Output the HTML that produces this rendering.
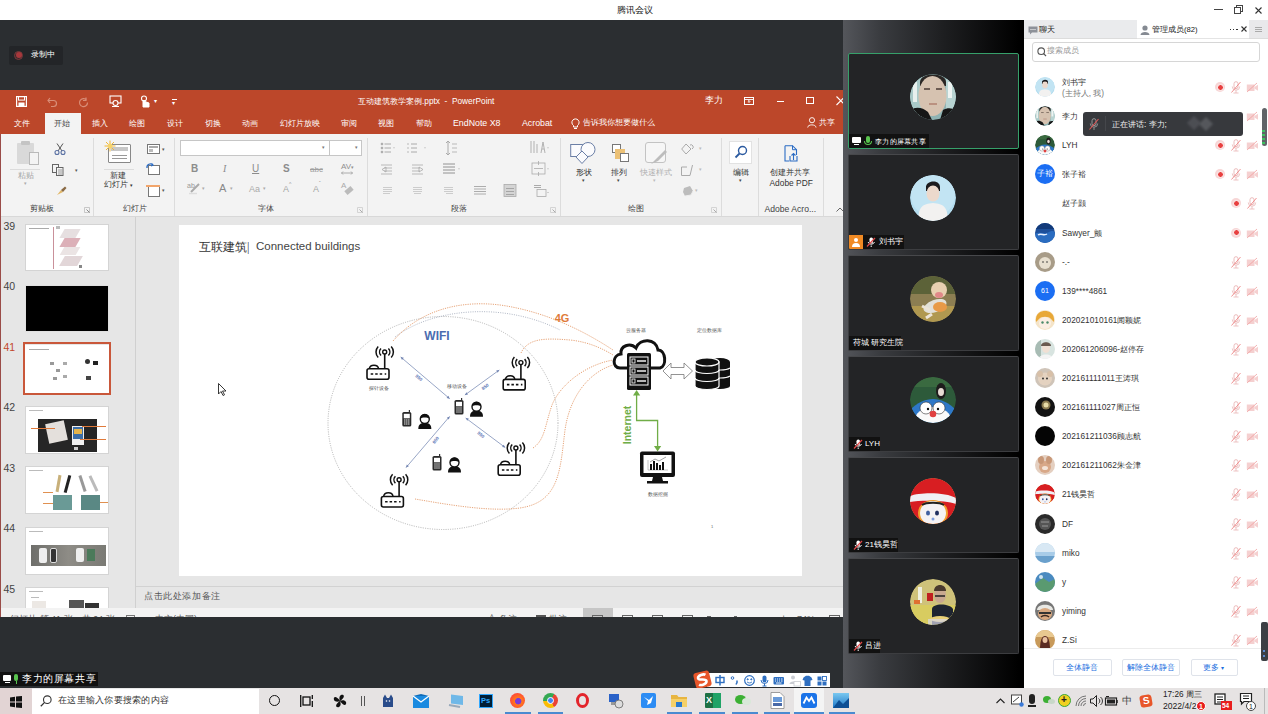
<!DOCTYPE html>
<html><head><meta charset="utf-8">
<style>
*{margin:0;padding:0;box-sizing:border-box}
html,body{width:1268px;height:714px;overflow:hidden;background:#fff;font-family:"Liberation Sans",sans-serif;}
.a{position:absolute}
.t{position:absolute;white-space:nowrap;line-height:1}
svg{position:absolute;overflow:visible}
#title{left:0;top:0;width:1268px;height:20px;background:#fff}
#main{left:0;top:20px;width:843px;height:668px;background:#2b2e31}
#ppt{left:0;top:90px;width:843px;height:527px;background:#e6e6e6;overflow:hidden}
#pttl{left:0;top:0;width:843px;height:44px;background:#bc472a;color:#fff}
#ribbon{left:0;top:44px;width:843px;height:83px;background:#f3f3f3;border-bottom:1px solid #d8d8d8}
.rl{position:absolute;white-space:nowrap;line-height:1;font-size:8px;color:#444}
.sep{position:absolute;top:4px;width:1px;height:78px;background:#dcdcdc}
#thumbs{left:0;top:127px;width:136px;height:391px;background:#e6e6e6;border-right:1px solid #d0d0d0}
.th{position:absolute;left:24.5px;width:84px;height:47px;background:#fff;border:1px solid #d4d4d4}
.tn{position:absolute;left:3.5px;font-size:10.5px;color:#444;line-height:1}
#slide{left:179px;top:135px;width:623px;height:351px;background:#fff;overflow:hidden}
#notes{left:136px;top:496px;width:707px;height:22px;border-top:1px solid #d2d2d2}
#status{left:0;top:518px;width:843px;height:9px;background:#f3f3f3;overflow:hidden}
#vcol{left:843px;top:20px;width:181px;height:668px;background:linear-gradient(90deg,#54565b 0%,#3a3c40 20%,#1e1f21 55%,#000 97%)}
.tile{position:absolute;left:5px;width:170.5px;height:96px;background:#232426;border:1px solid #3c3d40;border-top-color:#47484b;border-radius:2px;overflow:hidden}
.av{position:absolute;left:61px;top:20px;width:46px;height:46px;border-radius:50%;overflow:hidden}
.lab{position:absolute;left:0;bottom:0;height:14px;background:#111;color:#fff;font-size:8px;line-height:14px;white-space:nowrap}
#panel{left:1024px;top:20px;width:244px;height:668px;background:#fff;overflow:hidden}
.row{position:absolute;left:0;width:244px;height:29px}
.mav{position:absolute;left:11px;top:4px;width:20px;height:20px;border-radius:50%;overflow:hidden}
.mn{position:absolute;left:38px;top:10px;font-size:8.3px;color:#333;white-space:nowrap;line-height:1}
#taskbar{left:0;top:688px;width:1268px;height:26px;background:#e6e3e3}
</style></head><body>
<div id="title" class="a">
  <div class="t" style="left:617px;top:6px;font-size:8.5px;color:#111">腾讯会议</div>
  <div class="a" style="left:1214px;top:9.3px;width:8.5px;height:1.2px;background:#444"></div>
  <div class="a" style="left:1236px;top:5px;width:7px;height:7px;border:1px solid #444"></div>
  <div class="a" style="left:1234px;top:7px;width:7px;height:7px;border:1px solid #444;background:#fff"></div>
  <svg style="left:1254.5px;top:6.5px" width="8" height="8"><path d="M0.5 0.5L6.5 6.5M6.5 0.5L0.5 6.5" stroke="#333" stroke-width="1.1"/></svg>
</div>
<div id="main" class="a">
  <div class="a" style="left:9px;top:26px;width:54px;height:19px;background:#232528;border-radius:2px"></div>
  <div class="a" style="left:14px;top:30.5px;width:9px;height:9px;border-radius:50%;border:1px solid #7a3a3c;background:#3a2a2c"></div>
  <div class="a" style="left:15.5px;top:32px;width:6px;height:6px;border-radius:50%;background:#a8383c"></div>
  <div class="t" style="left:31px;top:31px;font-size:7.8px;color:#fff">录制中</div>
  <!-- screen share label -->
  <div class="a" style="left:0;top:652px;width:98px;height:14px;background:#111"></div>
  <div class="a" style="left:3px;top:655px;width:8px;height:6px;background:#fff;border-radius:1px"></div>
  <div class="a" style="left:5px;top:662px;width:5px;height:1px;background:#fff"></div>
  <div class="a" style="left:14px;top:654px;width:4px;height:7px;background:#58c34e;border-radius:2px"></div>
  <div class="a" style="left:16px;top:661px;width:1px;height:3px;background:#58c34e"></div>
  <div class="t" style="left:22px;top:654px;font-size:10px;letter-spacing:0.6px;color:#fff">李力的屏幕共享</div>
  <!-- sogou -->
  <div class="a" style="left:707px;top:653px;width:122.5px;height:14px;background:#fff"></div>
  <svg style="left:692px;top:649.5px" width="22" height="19"><g transform="rotate(-14 11 9.5)"><rect x="2.5" y="1.5" width="16" height="16" rx="3" fill="#e8562a"/><path d="M14.5 5.5C13 4 7 4 6.5 7C6 10 14.5 8.5 14 12C13.5 15 7.5 15 6 13.5" fill="none" stroke="#fff" stroke-width="2.6"/></g></svg>
  <svg style="left:715px;top:654.5px" width="115" height="12">
   <g fill="none" stroke="#2f6fc0">
    <rect x="1" y="2.5" width="8" height="5" stroke-width="1.4"/><path d="M5 0V10.5" stroke-width="1.5"/>
    <circle cx="17.5" cy="3" r="1.3" stroke-width="1"/><path d="M22 5.5V7.5L21 9.5" stroke-width="1.5"/>
    <circle cx="34.5" cy="5.5" r="4.8" stroke-width="1.2"/><circle cx="32.7" cy="4.3" r="0.6" fill="#2f6fc0"/><circle cx="36.3" cy="4.3" r="0.6" fill="#2f6fc0"/><path d="M32 6.8C33 8.3 36 8.3 37 6.8" stroke-width="0.9"/>
    <rect x="47.5" y="0.5" width="4" height="7" rx="2" fill="#2f6fc0" stroke="none"/><path d="M46 5A3.5 3.5 0 0 0 53 5M49.5 8.5V11M47.5 11H51.5" stroke-width="1"/>
    <rect x="58.5" y="2" width="10.5" height="7.5" rx="1" fill="#2f6fc0" stroke="none"/>
    <path d="M60 4H61M62 4H63M64 4H65M66 4H67.5M60 6H61M62 6H63M64 6H65M66 6H67.5M61 8H66.5" stroke="#fff" stroke-width="0.9"/>
   </g>
   <circle cx="78" cy="2.5" r="2" fill="#c9ccd2"/><path d="M74.5 9C74.5 5.5 81.5 5.5 81.5 9Z" fill="#c9ccd2"/><rect x="79" y="6.5" width="6.5" height="4.5" fill="#fff" stroke="#c9ccd2" stroke-width="0.8"/>
   <path d="M88.5 2.5L91 0.8H94L96.5 2.5L97.5 5L95.5 5.5V11H89.5V5.5L87.5 5Z" fill="#2f6fc0"/>
   <rect x="102.5" y="1.5" width="4" height="4" fill="#2f6fc0"/><rect x="107.5" y="1.5" width="4" height="4" fill="none" stroke="#2f6fc0" stroke-width="0.9"/><rect x="102.5" y="6.5" width="4" height="4" fill="#2f6fc0"/><rect x="107.5" y="6.5" width="4" height="4" fill="#2f6fc0"/>
  </svg>
</div>
</div>
<div id="ppt" class="a">
 <div id="pttl" class="a">
  <!-- qat -->
  <svg style="left:16px;top:6px" width="11" height="11"><rect x="0.6" y="0.6" width="9.8" height="9.8" fill="none" stroke="#fff" stroke-width="1.2"/><rect x="2.5" y="0.6" width="6" height="3.5" fill="none" stroke="#fff" stroke-width="1"/><rect x="2.5" y="6.5" width="6" height="4" fill="#fff"/></svg>
  <svg style="left:47px;top:6px" width="11" height="11"><path d="M3 2L1 4.5L3 7M1 4.5H6.5A3 3 0 0 1 6.5 10.5H4" fill="none" stroke="#d98e78" stroke-width="1.2"/></svg>
  <svg style="left:78px;top:6px" width="11" height="11"><path d="M8 1.5V4.5H5M8.5 4A4 4 0 1 0 9.5 6.5" fill="none" stroke="#d98e78" stroke-width="1.2"/></svg>
  <svg style="left:109px;top:5px" width="13" height="13"><rect x="1" y="1" width="11" height="7" fill="none" stroke="#fff" stroke-width="1.1"/><circle cx="6.5" cy="8" r="2.5" fill="#b8472b" stroke="#fff" stroke-width="1.1"/><path d="M3 11.5H10" stroke="#fff"/></svg>
  <svg style="left:139px;top:5px" width="12" height="13"><circle cx="5" cy="3.5" r="2.5" fill="none" stroke="#fff" stroke-width="1.1"/><path d="M4 5V12H10V8L6 6.5V5" fill="#fff" stroke="#fff"/></svg>
  <div class="t" style="left:154px;top:8px;font-size:6px;color:#fff">▾</div>
  <div class="a" style="left:172px;top:9px;width:5px;height:1px;background:#fff"></div>
  <div class="t" style="left:172px;top:10px;font-size:6px;color:#fff">▾</div>
  <div class="t" style="left:358px;top:6.5px;font-size:8.3px;color:#fff">互动建筑教学案例.pptx&nbsp; -&nbsp; PowerPoint</div>
  <div class="t" style="left:705px;top:6px;font-size:8.6px;color:#fff">李力</div>
  <svg style="left:744px;top:6.8px" width="10" height="8"><rect x="0.5" y="0.5" width="9" height="7" fill="none" stroke="#fff"/><path d="M0.5 2.5H9.5M5 3.5V6M3.8 4.7L5 3.5L6.2 4.7" stroke="#fff" fill="none" stroke-width="0.9"/></svg>
  <div class="a" style="left:776.5px;top:10.5px;width:7px;height:1px;background:#fff"></div>
  <div class="a" style="left:806px;top:7.3px;width:7.5px;height:7px;border:1px solid #fff"></div>
  <svg style="left:836px;top:6px" width="10" height="10"><path d="M0.5 0.5L9 9M9 0.5L0.5 9" stroke="#fff" stroke-width="1.1"/></svg>
  <!-- tabs -->
  <div class="a" style="left:45px;top:23px;width:36px;height:21px;background:#f3f3f3"></div>
  <div class="t" style="left:14px;top:29px;font-size:8.3px">文件</div>
  <div class="t" style="left:54px;top:29px;font-size:8.3px;color:#444">开始</div>
  <div class="t" style="left:92px;top:29px;font-size:8.3px">插入</div>
  <div class="t" style="left:129px;top:29px;font-size:8.3px">绘图</div>
  <div class="t" style="left:167px;top:29px;font-size:8.3px">设计</div>
  <div class="t" style="left:205px;top:29px;font-size:8.3px">切换</div>
  <div class="t" style="left:242px;top:29px;font-size:8.3px">动画</div>
  <div class="t" style="left:280px;top:29px;font-size:8.3px">幻灯片放映</div>
  <div class="t" style="left:341px;top:29px;font-size:8.3px">审阅</div>
  <div class="t" style="left:378px;top:29px;font-size:8.3px">视图</div>
  <div class="t" style="left:416px;top:29px;font-size:8.3px">帮助</div>
  <div class="t" style="left:453px;top:29px;font-size:8.8px">EndNote X8</div>
  <div class="t" style="left:522px;top:29px;font-size:8.8px">Acrobat</div>
  <svg style="left:571px;top:27px" width="9" height="12"><path d="M2.5 8.5A3.6 3.6 0 1 1 6.5 8.5V10H2.5Z" fill="none" stroke="#fff" stroke-width="1"/><path d="M3 11.5H6" stroke="#fff"/></svg>
  <div class="t" style="left:583px;top:29px;font-size:8.1px">告诉我你想要做什么</div>
  <svg style="left:806.5px;top:27px" width="10" height="11"><circle cx="5" cy="3.2" r="2.6" fill="none" stroke="#fff" stroke-width="0.9"/><path d="M0.7 10.5C0.7 7 9 7 9 10.5" fill="none" stroke="#fff" stroke-width="0.9"/></svg>
  <div class="t" style="left:819px;top:28px;font-size:8.3px">共享</div>
 </div>
 <div id="ribbon" class="a">
  <!-- clipboard group -->
  <div class="a" style="left:17px;top:9px;width:17px;height:21px;background:#d9d9d9;border-radius:1px"></div>
  <div class="a" style="left:21px;top:7px;width:9px;height:4px;background:#c4c4c4;border-radius:1px"></div>
  <div class="a" style="left:29px;top:18px;width:10px;height:13px;background:#f3f3f3;border:1px solid #b9b9b9"></div>
  <div class="a" style="left:10px;top:35px;width:30px;height:1px;background:#dcdcdc"></div>
  <div class="rl" style="left:18px;top:38px;color:#a6a6a6">粘贴</div>
  <div class="t" style="left:24px;top:47px;font-size:5px;color:#aaa">▾</div>
  <svg style="left:54px;top:9px" width="12" height="12"><path d="M3 0.5L8 8M9 0.5L4 8" stroke="#555" stroke-width="1"/><circle cx="3" cy="9.5" r="2" fill="none" stroke="#5b72a4" stroke-width="1.1"/><circle cx="9" cy="9.5" r="2" fill="none" stroke="#5b72a4" stroke-width="1.1"/></svg>
  <svg style="left:52px;top:30px" width="12" height="12"><rect x="0.5" y="0.5" width="6" height="8" fill="#f3f3f3" stroke="#666"/><rect x="4.5" y="3.5" width="6.5" height="8" fill="#f3f3f3" stroke="#666"/><path d="M6 6H10M6 8H10M6 10H10" stroke="#777" stroke-width="0.7"/></svg>
  <div class="t" style="left:75px;top:34px;font-size:5px;color:#555">▾</div>
  <svg style="left:56px;top:52px" width="11" height="10"><path d="M1 9L5 4L7 6Z" fill="#e2b868"/><path d="M5 4L9 0.5L10.5 2L7 6Z" fill="#8a6a45"/></svg>
  <div class="rl" style="left:30px;top:71px">剪贴板</div>
  <svg style="left:84px;top:73px" width="6" height="6"><path d="M0.5 0.5H5.5V5.5H0.5Z" fill="none" stroke="#bbb" stroke-width="0.8"/><path d="M2.5 2.5L5.5 5.5" stroke="#888"/></svg>
  <div class="sep" style="left:93px"></div>
  <!-- slides group -->
  <div class="a" style="left:108px;top:10px;width:23px;height:19px;background:#fff;border:1px solid #888;border-radius:1px"></div>
  <div class="a" style="left:111px;top:13px;width:17px;height:4px;background:#c7c7c7"></div>
  <div class="a" style="left:112px;top:21px;width:15px;height:1px;background:#999"></div>
  <div class="a" style="left:112px;top:24px;width:15px;height:1px;background:#999"></div>
  <svg style="left:104px;top:6px" width="12" height="12"><path d="M6 0.5V11.5M0.5 6H11.5M2 2L10 10M10 2L2 10" stroke="#f0b73a" stroke-width="1"/><circle cx="6" cy="6" r="2.5" fill="#f6d36b"/></svg>
  <div class="a" style="left:104px;top:35px;width:30px;height:1px;background:#dcdcdc"></div>
  <div class="rl" style="left:110px;top:38px;color:#333">新建</div>
  <div class="rl" style="left:104px;top:47px;color:#333">幻灯片 <span style="font-size:5px">▾</span></div>
  <div class="a" style="left:147px;top:10px;width:13px;height:10px;background:#fff;border:1px solid #777"></div>
  <div class="a" style="left:149px;top:12px;width:9px;height:2px;background:#aaa"></div>
  <div class="a" style="left:149px;top:15px;width:4px;height:3px;background:#bbb"></div>
  <div class="t" style="left:162px;top:13px;font-size:5px;color:#555">▾</div>
  <div class="a" style="left:148px;top:31px;width:12px;height:10px;background:#fff;border:1px solid #777"></div>
  <svg style="left:146px;top:29px" width="8" height="6"><path d="M1 5A3.5 3.5 0 0 1 7 2M5.5 0.5L7 2L5 3" fill="none" stroke="#2b6cc4" stroke-width="1.3"/></svg>
  <div class="a" style="left:148px;top:52px;width:12px;height:11px;background:#fff;border:1px solid #777"></div>
  <div class="a" style="left:146px;top:51px;width:14px;height:2px;background:#f2a56b"></div>
  <div class="t" style="left:162px;top:54px;font-size:5px;color:#555">▾</div>
  <div class="rl" style="left:123px;top:71px">幻灯片</div>
  <div class="sep" style="left:174px"></div>
  <!-- font group -->
  <div class="a" style="left:180px;top:6px;width:182px;height:16px;background:#fff;border:1px solid #c6c6c6"></div>
  <div class="a" style="left:329px;top:6px;width:1px;height:16px;background:#c6c6c6"></div>
  <div class="t" style="left:322px;top:11px;font-size:5px;color:#777">▾</div>
  <div class="t" style="left:355px;top:11px;font-size:5px;color:#777">▾</div>
  <div class="t" style="left:191px;top:30px;font-size:10px;font-weight:bold;color:#8c8c8c">B</div>
  <div class="t" style="left:223px;top:30px;font-size:10px;font-style:italic;font-family:'Liberation Serif',serif;color:#8c8c8c">I</div>
  <div class="t" style="left:252px;top:30px;font-size:10px;text-decoration:underline;color:#8c8c8c">U</div>
  <div class="t" style="left:283px;top:30px;font-size:10px;font-weight:bold;color:#8c8c8c">S</div>
  <div class="t" style="left:310px;top:32px;font-size:8px;text-decoration:line-through;color:#a0a0a0">abc</div>
  <div class="t" style="left:341px;top:29px;font-size:8px;color:#909090">AV<span style="font-size:5px">▾</span></div>
  <svg style="left:341px;top:37px" width="12" height="4"><path d="M0.5 2H11.5M2 0.5L0.5 2L2 3.5M10 0.5L11.5 2L10 3.5" fill="none" stroke="#999" stroke-width="0.8"/></svg>
  <div class="t" style="left:187px;top:48px;font-size:7px;color:#999">ab</div>
  <svg style="left:188px;top:48px" width="13" height="12"><path d="M3 10L11 2" stroke="#aaa" stroke-width="2"/><path d="M1 11.5H9" stroke="#ddd" stroke-width="1.5"/></svg>
  <div class="t" style="left:202px;top:52px;font-size:5px;color:#aaa">▾</div>
  <div class="t" style="left:219px;top:49px;font-size:11px;color:#888">A</div>
  <div class="t" style="left:230px;top:52px;font-size:5px;color:#aaa">▾</div>
  <div class="t" style="left:249px;top:51px;font-size:9px;color:#aaa">Aa</div>
  <div class="t" style="left:263px;top:52px;font-size:5px;color:#aaa">▾</div>
  <div class="t" style="left:283px;top:51px;font-size:9px;color:#a5a5a5">A</div>
  <div class="t" style="left:289px;top:48px;font-size:5px;color:#999">^</div>
  <div class="t" style="left:313px;top:51px;font-size:9px;color:#a5a5a5">A</div>
  <div class="t" style="left:319px;top:47px;font-size:5px;color:#999">ˇ</div>
  <div class="t" style="left:341px;top:48px;font-size:8px;color:#aaa">A</div>
  <div class="a" style="left:345px;top:54px;width:8px;height:5px;background:#bbb;transform:rotate(-40deg)"></div>
  <div class="rl" style="left:258px;top:71px">字体</div>
  <svg style="left:357px;top:73px" width="6" height="6"><path d="M0.5 0.5H5.5V5.5H0.5Z" fill="none" stroke="#ccc" stroke-width="0.8"/><path d="M2.5 2.5L5.5 5.5" stroke="#aaa"/></svg>
  <div class="sep" style="left:367px"></div>
  <!-- paragraph group -->
  <svg style="left:380px;top:5px" width="200" height="66">
   <g stroke="#aaa" stroke-width="1" fill="#aaa">
    <circle cx="2" cy="5" r="0.9"/><circle cx="2" cy="9" r="0.9"/><circle cx="2" cy="13" r="0.9"/>
    <path d="M4.5 5H11M4.5 9H11M4.5 13H11" fill="none"/>
    <path d="M13 8.5L15 8.5L14 9.5Z" stroke="none"/>
    <path d="M31 5H37M31 9H37M31 13H37" fill="none"/>
    <path d="M28 4V6M28 8V10M28 12V14" fill="none" stroke-width="0.8"/>
    <path d="M44 8.5L46 8.5L45 9.5Z" stroke="none"/>
    <path d="M68 2V16M66 4L68 2L70 4M66 14L68 16L70 14" fill="none"/>
    <path d="M72 5H77M72 9H77M72 13H77" fill="none" stroke-width="0.8"/>
    <path d="M151 2V14M154 2V14M157 5V14M161 14L163 3L165 14M162 10H164" fill="none" stroke-width="0.9"/>
    <path d="M167 8.5L169 8.5L168 9.5Z" stroke="none"/>
    <g transform="translate(0,-4)"><path d="M1 30H12M4 33H12M4 36H12M1 39H12M2 34.5L6 32V37Z" fill="none" stroke-width="0.8"/>
    <path d="M32 30H43M32 33H40M32 36H40M32 39H43M43 34.5L39 32V37Z" fill="none" stroke-width="0.8"/>
    <path d="M63 29H75M63 32H75M63 35H75M63 38H75" fill="none" stroke="#888" stroke-width="0.9"/>
    <path d="M78 33.5L80 33.5L79 34.5Z" stroke="none"/>
    <rect x="152" y="28" width="13" height="11" fill="none" stroke-width="0.8"/>
    <path d="M158.5 26V30M158.5 37V41M154 33.5H163" fill="none" stroke-width="0.8"/>
    <path d="M167 33.5L169 33.5L168 34.5Z" stroke="none"/>
    </g><g transform="translate(0,-2.5)"><path d="M3 51H12M3 53H12M3 55H12M3 57H10" fill="none" stroke="#ccc" stroke-width="1"/>
    <path d="M33 51H42M33 53H42M33 55H42M34 57H41" fill="none" stroke="#ccc" stroke-width="1"/>
    <path d="M64 51H73M64 53H73M64 55H73M66 57H73" fill="none" stroke="#ccc" stroke-width="1"/>
    <path d="M94 50H106M94 52.5H106M94 55H106M94 57.5H106" fill="none" stroke="#999" stroke-width="0.8"/>
    <rect x="124" y="48" width="12" height="12" fill="#d4d4d4" stroke="#aaa" stroke-width="0.8"/>
    <path d="M126 52H134M126 55H134M126 58H134" fill="none" stroke="#999" stroke-width="0.8"/>
    <path d="M154 49H161M154 51H161" fill="none" stroke-width="1.2"/>
    <rect x="157" y="53" width="9" height="7" fill="#f3f3f3" stroke-width="0.8"/>
    <path d="M167 55.5L169 55.5L168 56.5Z" stroke="none"/>
   </g></g>
  </svg>
  <div class="rl" style="left:451px;top:71px">段落</div>
  <svg style="left:550px;top:73px" width="6" height="6"><path d="M0.5 0.5H5.5V5.5H0.5Z" fill="none" stroke="#ccc" stroke-width="0.8"/><path d="M2.5 2.5L5.5 5.5" stroke="#aaa"/></svg>
  <div class="sep" style="left:560px"></div>
  <!-- drawing group -->
  <svg style="left:570px;top:7px" width="26" height="24"><rect x="0.7" y="3.5" width="13" height="12" fill="#fbfbfd" stroke="#6b7fa6" stroke-width="1"/><circle cx="18" cy="8.5" r="7" fill="#fbfbfd" stroke="#6b7fa6" stroke-width="1"/><path d="M12 10L18 16L12 22.5L6 16Z" fill="#fbfbfd" stroke="#6b7fa6" stroke-width="1"/></svg>
  <div class="rl" style="left:576px;top:35px;color:#333">形状</div>
  <div class="t" style="left:582px;top:44px;font-size:5px;color:#444">▾</div>
  <div class="a" style="left:612px;top:10px;width:9px;height:9px;background:#fff;border:1px solid #777"></div>
  <div class="a" style="left:615px;top:15px;width:10px;height:10px;background:#ecc176"></div>
  <div class="a" style="left:620px;top:19px;width:9px;height:9px;background:#fff;border:1px solid #777"></div>
  <div class="rl" style="left:611px;top:35px;color:#333">排列</div>
  <div class="t" style="left:617px;top:44px;font-size:5px;color:#444">▾</div>
  <div class="a" style="left:645px;top:8px;width:21px;height:21px;background:#f6f6f6;border:1px solid #c3c3c3;border-radius:3px"></div>
  <svg style="left:650px;top:14px" width="18" height="18"><path d="M1 16L6 11L15 2L17 4L8 13Z" fill="#bdbdbd"/></svg>
  <div class="rl" style="left:640px;top:35px;color:#b0b0b0">快速样式</div>
  <div class="t" style="left:653px;top:44px;font-size:5px;color:#bbb">▾</div>
  <svg style="left:681px;top:9px" width="12" height="12"><path d="M5 1L10 6L5 11L0.7 6Z" fill="none" stroke="#aaa"/><path d="M9 2A2 2 0 0 1 11 6" fill="none" stroke="#aaa"/></svg>
  <div class="t" style="left:699px;top:12px;font-size:5px;color:#bbb">▾</div>
  <svg style="left:681px;top:30px" width="12" height="12"><path d="M0.5 11.5V3H6M0.5 11.5H9L11.5 1" fill="none" stroke="#aaa"/></svg>
  <div class="t" style="left:699px;top:33px;font-size:5px;color:#bbb">▾</div>
  <svg style="left:682px;top:51px" width="12" height="12"><path d="M2 3L8 1L11 6L9 10L3 11L1 7Z" fill="#bcbcbc"/><path d="M3 11L9 10L11 6" fill="none" stroke="#eee"/></svg>
  <div class="t" style="left:695px;top:54px;font-size:5px;color:#bbb">▾</div>
  <div class="rl" style="left:628px;top:71px">绘图</div>
  <svg style="left:711px;top:73px" width="6" height="6"><path d="M0.5 0.5H5.5V5.5H0.5Z" fill="none" stroke="#ccc" stroke-width="0.8"/><path d="M2.5 2.5L5.5 5.5" stroke="#aaa"/></svg>
  <div class="sep" style="left:721px"></div>
  <!-- edit group -->
  <div class="a" style="left:729px;top:7px;width:23px;height:23px;background:#fff;border:1px solid #e2e2e2"></div>
  <svg style="left:734px;top:11px" width="14" height="14"><circle cx="8.5" cy="5.5" r="4" fill="none" stroke="#2b5aa0" stroke-width="1.4"/><path d="M5.5 8.5L1.5 12.5" stroke="#2b5aa0" stroke-width="1.8"/></svg>
  <div class="rl" style="left:733px;top:35px;color:#333">编辑</div>
  <div class="t" style="left:739px;top:44px;font-size:5px;color:#444">▾</div>
  <div class="sep" style="left:758px"></div>
  <!-- acrobat group -->
  <svg style="left:784px;top:11px" width="14" height="17"><path d="M1 0.7H8.5L12.5 4.7V10M1 0.7V16H5" fill="none" stroke="#2b6cc4" stroke-width="1.1"/><path d="M8.5 0.7V4.7H12.5" fill="none" stroke="#2b6cc4"/><path d="M6 11V16H13V11M9.5 15V8.5M7.5 10.5L9.5 8.5L11.5 10.5" fill="none" stroke="#2b6cc4" stroke-width="1.1"/></svg>
  <div class="rl" style="left:770px;top:35px;color:#333">创建并共享</div>
  <div class="t" style="left:769.5px;font-size:8.4px;color:#333;top:44.5px">Adobe PDF</div>
  <div class="t" style="left:764.5px;top:71px;font-size:8.6px;color:#444">Adobe Acro...</div>
  <div class="sep" style="left:823px"></div>
  <svg style="left:836px;top:73px" width="8" height="5"><path d="M0.5 4.5L4 1L7.5 4.5" fill="none" stroke="#666"/></svg>
 </div>
 <div id="thumbs" class="a">
  <div class="tn" style="top:3.5px">39</div>
  <div class="th" style="top:7px">
    <div class="a" style="left:3px;top:3px;width:20px;height:1px;background:#aaa"></div>
    <div class="a" style="left:27px;top:2px;width:1px;height:42px;background:#c9909a"></div>
    <div class="a" style="left:30px;top:1px;width:4px;height:3px;background:#bbb"></div>
    <div class="a" style="left:36px;top:4px;width:16px;height:9px;background:#e6dfe0;transform:skewX(-30deg)"></div>
    <div class="a" style="left:36px;top:13px;width:16px;height:9px;background:#dcb0b8;transform:skewX(-30deg)"></div>
    <div class="a" style="left:36px;top:22px;width:16px;height:8px;background:#ebe4e4;transform:skewX(-30deg)"></div>
    <div class="a" style="left:36px;top:31px;width:18px;height:10px;background:#e2d6d8;transform:skewX(-30deg)"></div>
    <div class="a" style="left:53px;top:40px;width:3px;height:3px;background:#888"></div>
  </div>
  <div class="tn" style="top:64px">40</div>
  <div class="th" style="top:67.5px;background:#000;border-color:#e0e0e0"></div>
  <div class="tn" style="top:124.5px;color:#c2462a">41</div>
  <div class="a" style="left:23px;top:125px;width:88px;height:53px;border:2px solid #c9573a"></div>
  <div class="th" style="top:128px;left:25px;width:84px;height:48px;border:none">
    <div class="a" style="left:4px;top:4px;width:20px;height:1px;background:#aaa"></div>
    <div class="a" style="left:25px;top:17px;width:4px;height:3px;background:#999"></div>
    <div class="a" style="left:38px;top:17px;width:4px;height:3px;background:#aaa"></div>
    <div class="a" style="left:31px;top:24px;width:4px;height:3px;background:#999"></div>
    <div class="a" style="left:28px;top:32px;width:4px;height:3px;background:#999"></div>
    <div class="a" style="left:38px;top:30px;width:4px;height:3px;background:#aaa"></div>
    <div class="a" style="left:60px;top:14px;width:5px;height:5px;background:#333;border-radius:50%"></div>
    <div class="a" style="left:68px;top:16px;width:5px;height:4px;background:#222"></div>
    <div class="a" style="left:61px;top:31px;width:5px;height:4px;background:#444"></div>
  </div>
  <div class="tn" style="top:185px">42</div>
  <div class="th" style="top:188.5px;height:48px">
    <div class="a" style="left:3px;top:3px;width:14px;height:1px;background:#bbb"></div>
    <div class="a" style="left:12px;top:12px;width:59px;height:33px;background:#262626"></div>
    <div class="a" style="left:21px;top:15px;width:19px;height:20px;background:#e4e0dc;transform:rotate(-12deg)"></div>
    <div class="a" style="left:46px;top:19px;width:12px;height:19px;background:#f0f0f0"></div>
    <div class="a" style="left:47px;top:20px;width:10px;height:12px;background:#3c6ea8"></div>
    <div class="a" style="left:48px;top:22px;width:8px;height:5px;background:#e6b44a"></div>
    <div class="a" style="left:48px;top:40px;width:4px;height:3px;background:#ccc"></div>
    <div class="a" style="left:5px;top:21px;width:24px;height:1px;background:#e07a3a"></div>
    <div class="a" style="left:56px;top:19px;width:24px;height:1px;background:#e07a3a"></div>
    <div class="a" style="left:54px;top:32px;width:26px;height:1px;background:#e07a3a"></div>
  </div>
  <div class="tn" style="top:245.5px">43</div>
  <div class="th" style="top:249px;height:48px">
    <div class="a" style="left:3px;top:3px;width:14px;height:1px;background:#bbb"></div>
    <div class="a" style="left:31px;top:8px;width:3px;height:17px;background:#c8b07a;transform:rotate(10deg)"></div>
    <div class="a" style="left:40px;top:8px;width:3px;height:18px;background:#222;transform:rotate(15deg)"></div>
    <div class="a" style="left:55px;top:8px;width:3px;height:17px;background:#999;transform:rotate(-18deg)"></div>
    <div class="a" style="left:66px;top:8px;width:3px;height:17px;background:#bbb;transform:rotate(-25deg)"></div>
    <div class="a" style="left:27px;top:28px;width:19px;height:15px;background:#6a9a96"></div>
    <div class="a" style="left:55px;top:28px;width:19px;height:15px;background:#5a8884"></div>
    <div class="a" style="left:17px;top:25px;width:10px;height:1px;background:#e09050"></div>
    <div class="a" style="left:17px;top:36px;width:10px;height:1px;background:#e09050"></div>
    <div class="a" style="left:74px;top:35px;width:8px;height:1px;background:#e09050"></div>
  </div>
  <div class="tn" style="top:306px">44</div>
  <div class="th" style="top:309.5px;height:48px">
    <div class="a" style="left:3px;top:3px;width:14px;height:1px;background:#bbb"></div>
    <div class="a" style="left:5px;top:17px;width:75px;height:21px;background:linear-gradient(90deg,#6e6e6a 0%,#8e8c86 50%,#7a7a74 100%)"></div>
    <div class="a" style="left:13px;top:20px;width:8px;height:15px;background:#eee;border-radius:2px"></div>
    <div class="a" style="left:24px;top:20px;width:7px;height:15px;background:#333;border:1px solid #ddd;border-radius:2px"></div>
    <div class="a" style="left:50px;top:20px;width:8px;height:14px;background:#eee;border-radius:2px"></div>
    <div class="a" style="left:61px;top:21px;width:8px;height:12px;background:#4b7a5a"></div>
  </div>
  <div class="tn" style="top:366.5px">45</div>
  <div class="th" style="top:370px;height:40px">
    <div class="a" style="left:3px;top:3px;width:14px;height:1px;background:#bbb"></div>
    <div class="a" style="left:5px;top:9px;width:8px;height:1px;background:#bbb"></div>
    <div class="a" style="left:6px;top:13px;width:14px;height:10px;background:#ece8e4"></div>
    <div class="a" style="left:43px;top:12px;width:15px;height:10px;background:#555"></div>
    <div class="a" style="left:59px;top:15px;width:14px;height:8px;background:#333"></div>
  </div>
 </div>
 <div class="a" style="left:136px;top:127px;width:707px;height:369px;background:#e6e6e6"></div>
 <div id="slide" class="a">
  <div class="t" style="left:20px;top:16px;font-size:12px;color:#333;font-family:'Liberation Serif',serif">互联建筑|</div>
  <div class="t" style="left:77px;top:16px;font-size:11.5px;color:#444">Connected buildings</div>
<svg style="left:0;top:0" width="623" height="351" viewBox="179 225 623 351">
<defs>
<g id="rt"><path d="M3 1A4.8 4.5 0 0 1 12.5 1" fill="#fff" stroke="#111" stroke-width="1.5"/>
<rect x="0.8" y="0.8" width="22" height="10.5" rx="2" fill="#fff" stroke="#111" stroke-width="1.6"/>
<path d="M4.5 6H7M9 6H11.5M13.5 6H16M18.5 6H20" stroke="#111" stroke-width="1.6"/>
<path d="M18.5 0.8V-14" stroke="#111" stroke-width="1.6"/><circle cx="18.5" cy="-16" r="2" fill="#fff" stroke="#111" stroke-width="1.4"/>
<path d="M14.8 -19.5A5 5 0 0 0 14.8 -12.5M22.2 -19.5A5 5 0 0 1 22.2 -12.5M12 -21.5A8 8 0 0 0 12 -10.5M25 -21.5A8 8 0 0 1 25 -10.5" fill="none" stroke="#111" stroke-width="1.5"/></g>
<g id="ph"><rect x="0.5" y="2" width="9" height="14.5" rx="1.6" fill="#2a2a2a"/><rect x="2" y="3.8" width="6" height="4.5" fill="#fff"/>
<path d="M2.3 10H3.7M4.3 10H5.7M6.3 10H7.7M2.3 12H3.7M4.3 12H5.7M6.3 12H7.7M2.3 14H3.7M4.3 14H5.7M6.3 14H7.7" stroke="#fff" stroke-width="1"/><rect x="7" y="0" width="1.2" height="2.5" fill="#333"/></g>
<g id="ps"><path d="M0 15.5C0 10.5 2.5 9.5 6.5 9.5S13 10.5 13 15.5Z" fill="#111"/><circle cx="6.5" cy="5.5" r="4.5" fill="#fff" stroke="#111" stroke-width="1.4"/><path d="M2 5A4.5 4.5 0 0 1 11 5C9 3.5 4 3.5 2 5Z" fill="#111"/></g>
</defs>
<ellipse cx="443" cy="423" rx="115" ry="106.5" fill="none" stroke="#a9a9a9" stroke-width="0.9" stroke-dasharray="1 1.3"/>
<path d="M395 337C430 310 500 300 560 330" fill="none" stroke="#9aa3b5" stroke-width="0.8" stroke-dasharray="1 1.3"/>
<path d="M393 341C420 310 460 300 500 305C550 312 590 335 613 350" fill="none" stroke="#e39a6a" stroke-width="0.9" stroke-dasharray="1.2 1.1"/>
<path d="M521 353C528 338 545 338 570 340C590 342 605 350 613 355" fill="none" stroke="#e39a6a" stroke-width="0.9" stroke-dasharray="1.2 1.1"/>
<path d="M533 448C545 440 545 425 552 405C560 385 585 365 613 360" fill="none" stroke="#e39a6a" stroke-width="0.9" stroke-dasharray="1.2 1.1"/>
<path d="M415 499C450 505 490 512 520 508C560 502 560 470 565 430C570 395 590 372 613 365" fill="none" stroke="#e39a6a" stroke-width="0.9" stroke-dasharray="1.2 1.1"/>
<path d="M400.7 357L449.7 398.7" stroke="#7d8fb8" stroke-width="0.8"/><path d="M449.7 398.7L446.6 397.9L448.4 395.8Z" fill="#6f82b0"/><path d="M400.7 357.0L403.8 357.8L402.0 359.9Z" fill="#6f82b0"/>
<path d="M499.3 370L464.9 395" stroke="#7d8fb8" stroke-width="0.8"/><path d="M464.9 395.0L466.4 392.2L468.0 394.4Z" fill="#6f82b0"/><path d="M499.3 370.0L497.8 372.8L496.2 370.6Z" fill="#6f82b0"/>
<path d="M465.7 418L505.2 447.5" stroke="#7d8fb8" stroke-width="0.8"/><path d="M505.2 447.5L502.1 446.9L503.7 444.7Z" fill="#6f82b0"/><path d="M465.7 418.0L468.8 418.6L467.2 420.8Z" fill="#6f82b0"/>
<path d="M449.7 416.4L406 467.6" stroke="#7d8fb8" stroke-width="0.8"/><path d="M406.0 467.6L406.8 464.5L408.9 466.3Z" fill="#6f82b0"/><path d="M449.7 416.4L448.9 419.5L446.8 417.7Z" fill="#6f82b0"/>
<text x="418" y="379" transform="rotate(40 418 379)" font-size="4.5" fill="#5a73b5" text-anchor="middle" font-weight="bold" font-family="Liberation Sans">850</text>
<text x="486" y="388" transform="rotate(-35 486 388)" font-size="4.5" fill="#5a73b5" text-anchor="middle" font-weight="bold" font-family="Liberation Sans">850</text>
<text x="480" y="436" transform="rotate(40 480 436)" font-size="4.5" fill="#5a73b5" text-anchor="middle" font-weight="bold" font-family="Liberation Sans">850</text>
<text x="437" y="441" transform="rotate(-55 437 441)" font-size="4.5" fill="#5a73b5" text-anchor="middle" font-weight="bold" font-family="Liberation Sans">850</text>
<use href="#rt" transform="translate(366.2 368)"/>
<use href="#rt" transform="translate(502.4 378.6)"/>
<use href="#rt" transform="translate(497.4 464)"/>
<use href="#rt" transform="translate(380.6 495.7)"/>
<use href="#ph" transform="translate(454 398)"/>
<use href="#ph" transform="translate(401.8 410)"/>
<use href="#ph" transform="translate(432 454)"/>
<use href="#ps" transform="translate(470 401.3)"/>
<use href="#ps" transform="translate(418.3 413.5)"/>
<use href="#ps" transform="translate(448 457)"/>
<text x="437" y="340" font-size="12" font-weight="bold" fill="#4b6cb0" text-anchor="middle" font-family="Liberation Sans">WIFI</text>
<text x="562" y="322" font-size="11" font-weight="bold" fill="#e07b39" text-anchor="middle" font-family="Liberation Sans">4G</text>
<text x="379" y="389.5" font-size="5.3" fill="#555" text-anchor="middle">探针设备</text>
<text x="456.5" y="387.5" font-size="5.3" fill="#555" text-anchor="middle">移动设备</text>
<text x="635.5" y="331.5" font-size="5.3" fill="#555" text-anchor="middle">云服务器</text>
<text x="709" y="331.5" font-size="5.3" fill="#555" text-anchor="middle">定位数据库</text>
<text x="657.5" y="495.5" font-size="5.3" fill="#555" text-anchor="middle">数据挖掘</text>
<path d="M620 368C612 368 612 355 621 354C620 346 630 342 636 348C640 338 656 338 658 350C666 350 667 366 660 368Z" fill="#fff" stroke="#111" stroke-width="3"/>
<rect x="627" y="353" width="24" height="37" rx="1.5" fill="#111"/>
<rect x="630" y="357" width="18" height="8" fill="none" stroke="#fff" stroke-width="1"/>
<rect x="632" y="359" width="3" height="4" fill="none" stroke="#fff" stroke-width="0.8"/><path d="M637 361H646" stroke="#fff" stroke-width="1.4"/>
<rect x="630" y="367" width="18" height="8" fill="none" stroke="#fff" stroke-width="1"/>
<rect x="632" y="369" width="3" height="4" fill="none" stroke="#fff" stroke-width="0.8"/><path d="M637 371H646" stroke="#fff" stroke-width="1.4"/>
<rect x="630" y="377" width="18" height="8" fill="none" stroke="#fff" stroke-width="1"/>
<rect x="632" y="379" width="3" height="4" fill="none" stroke="#fff" stroke-width="0.8"/><path d="M637 381H646" stroke="#fff" stroke-width="1.4"/>
<path d="M663 371L671 363V367.5H684V363L692.5 371L684 379V374.5H671V379Z" fill="#fff" stroke="#777" stroke-width="0.8"/>
<g fill="#111"><ellipse cx="720" cy="362" rx="10" ry="4"/><rect x="710" y="362" width="20" height="24"/><ellipse cx="720" cy="386" rx="10" ry="3"/></g>
<g fill="#111" stroke="#fff" stroke-width="1.2"><path d="M695 362V386A12 3.5 0 0 0 719 386V362Z"/><ellipse cx="707" cy="362" rx="12" ry="4"/><path d="M695 370A12 3.5 0 0 0 719 370M695 378A12 3.5 0 0 0 719 378" fill="none"/></g>
<path d="M719 370A11 3.5 0 0 0 730 368M719 378A11 3.5 0 0 0 730 376" fill="none" stroke="#fff" stroke-width="1.2"/>
<path d="M636.6 393V420.5H657.6V448" fill="none" stroke="#70ad47" stroke-width="1.3"/>
<path d="M636.6 390L633 395.5H640.2Z" fill="#70ad47"/><path d="M657.6 451.5L654 446H661.2Z" fill="#70ad47"/>
<text x="631" y="425" transform="rotate(-90 631 425)" font-size="10.5" font-weight="bold" fill="#70ad47" text-anchor="middle" font-family="Liberation Sans">Internet</text>
<rect x="640" y="451.5" width="35" height="25.5" rx="2" fill="#111"/><rect x="643.5" y="455" width="28" height="18" fill="#fff"/>
<path d="M648 470V460M648 470H668" stroke="#888" stroke-width="0.5"/><path d="M651 470V464M654 470V461M657 470V463M660 470V465M663 470V462" stroke="#111" stroke-width="2"/><path d="M650 462L655 459L659 461L666 457" fill="none" stroke="#666" stroke-width="0.6"/>
<path d="M653 477H662L663 481H652Z" fill="#111"/><rect x="647" y="481" width="21" height="2.5" fill="#111"/>
<text x="711" y="528" font-size="4" fill="#666" font-family="Liberation Sans">1</text>
</svg>
 <svg style="left:39px;top:158px" width="9" height="13"><path d="M0.5 0.5V11L3 8.5L5 12.5L6.5 11.8L4.5 8H8Z" fill="#fff" stroke="#222" stroke-width="0.9"/></svg>
 </div>
 <div id="notes" class="a">
  <div class="t" style="left:8px;top:5px;font-size:9px;letter-spacing:0.6px;color:#555">点击此处添加备注</div>
 </div>
 <div class="a" style="left:0;top:44px;width:1.3px;height:483px;background:#9a4c48;z-index:5"></div>
 <div id="status" class="a">
  <div class="t" style="left:10px;top:6.5px;font-size:9px;color:#555">幻灯片 第 41 张，共 64 张</div>
  <div class="a" style="left:126px;top:6.5px;width:9px;height:8px;border:1px solid #777"></div>
  <div class="t" style="left:155px;top:6.5px;font-size:9px;color:#555">中文(中国)</div>
  <div class="t" style="left:488px;top:6.5px;font-size:9px;color:#555">≜ 备注</div>
  <div class="a" style="left:536px;top:6.5px;width:10px;height:7px;background:#555"></div>
  <div class="t" style="left:549px;top:6.5px;font-size:9px;color:#555">批注</div>
  <div class="a" style="left:583px;top:0;width:30px;height:9px;background:#c6c6c6"></div>
  <div class="a" style="left:592px;top:6.5px;width:11px;height:7px;border:1px solid #666"></div>
  <div class="a" style="left:622px;top:6.5px;width:11px;height:7px;border:1px solid #666"></div>
  <div class="a" style="left:652px;top:6.5px;width:11px;height:7px;border:1px solid #666"></div>
  <div class="a" style="left:682px;top:6.5px;width:11px;height:7px;border:1px solid #666"></div>
  <div class="a" style="left:707px;top:7.5px;width:4px;height:1px;background:#666"></div>
  <div class="a" style="left:734px;top:7.5px;width:3px;height:6px;background:#666"></div>
  <div class="t" style="left:781px;top:5.5px;font-size:9px;color:#555">+</div>
  <div class="t" style="left:797px;top:6.5px;font-size:9px;color:#555">74%</div>
  <div class="a" style="left:829px;top:6.5px;width:11px;height:7px;border:1px solid #666"></div>
 </div>
</div>
<div id="vcol" class="a">
  <div class="tile" style="top:33px;border-color:#36a06a">
    <div class="av"><svg width="46" height="46" style="left:0;top:0"><defs><clipPath id="c1"><circle cx="23" cy="23" r="23"/></clipPath></defs><g clip-path="url(#c1)">
<rect width="46" height="46" fill="#8fb3b3"/><rect x="0" y="0" width="12" height="46" fill="#a9c9c8"/><rect x="3" y="8" width="4" height="20" fill="#e8f0ee"/><rect x="36" y="5" width="10" height="30" fill="#b8d4d2"/><rect x="38" y="8" width="4" height="16" fill="#eef4f2"/>
<path d="M10 8C10 -2 36 -2 36 8V12H10Z" fill="#2a2624"/>
<ellipse cx="22.5" cy="22" rx="14" ry="20" fill="#d6c2b0"/>
<path d="M14 15H20M26 15H32" stroke="#4a3a33" stroke-width="1.3"/><path d="M19 30H27" stroke="#b08070" stroke-width="1.4"/>
<path d="M-2 46V38C4 32 12 33 18 38L22 46ZM30 46L33 36C38 33 44 34 48 38V46Z" fill="#161616"/>
</g></svg></div>
    <div class="lab" style="width:80px">
      <div class="a" style="left:3px;top:3px;width:9px;height:6px;background:#fff;border-radius:1px"></div>
      <div class="a" style="left:5px;top:10px;width:5px;height:1px;background:#fff"></div>
      <div class="a" style="left:17px;top:2px;width:4px;height:7px;background:#59c44f;border-radius:2px"></div>
      <div class="a" style="left:15px;top:7px;width:8px;height:4px;border:1px solid #59c44f;border-top:none;border-radius:0 0 4px 4px"></div>
      <div class="t" style="left:26px;top:3.5px;font-size:7.3px;letter-spacing:0.3px">李力的屏幕共享</div>
    </div>
  </div>
  <div class="tile" style="top:134px">
    <div class="av"><svg width="46" height="46" style="left:0;top:0"><defs><clipPath id="c2"><circle cx="23" cy="23" r="23"/></clipPath></defs><g clip-path="url(#c2)">
<rect width="46" height="46" fill="#b4ddef"/><circle cx="23" cy="20" r="22" fill="#c2e4f3"/>
<path d="M16 13C15 5 30 4 30 12V16H16Z" fill="#1b1b1e"/>
<ellipse cx="23" cy="18.5" rx="6.5" ry="8" fill="#ecd9cc"/>
<path d="M8 48C8 32 12 29 23 28C34 29 38 32 38 48Z" fill="#f2f1f0"/>
</g></svg></div>
    <div class="lab" style="width:55px">
      <div class="a" style="left:0;top:0;width:14px;height:14px;background:#f08a24"></div>
      <div class="a" style="left:5px;top:3px;width:4px;height:4px;background:#fff;border-radius:50%"></div>
      <div class="a" style="left:3px;top:8px;width:8px;height:4px;background:#fff;border-radius:4px 4px 0 0"></div>
      <svg style="left:17px;top:2px" width="10" height="10"><rect x="3.5" y="0.5" width="3.5" height="6" rx="1.7" fill="#fff"/><path d="M2 5A3.5 3.5 0 0 0 8.5 5M5.2 8.5V10" fill="none" stroke="#fff"/><path d="M1 9.5L9 1" stroke="#e04848" stroke-width="1.2"/></svg>
      <div class="t" style="left:30px;top:3px;font-size:8px">刘书宇</div>
    </div>
  </div>
  <div class="tile" style="top:235px">
    <div class="av"><svg width="46" height="46" style="left:0;top:0"><defs><clipPath id="c3"><circle cx="23" cy="23" r="23"/></clipPath></defs><g clip-path="url(#c3)">
<rect width="46" height="46" fill="#8c7e52"/><rect y="0" width="46" height="18" fill="#5c6238"/><rect y="30" width="46" height="16" fill="#b09850"/>
<ellipse cx="29" cy="14" rx="8" ry="8" fill="#e8d0b0"/><ellipse cx="29" cy="19" rx="4" ry="3" fill="#e08888"/>
<ellipse cx="25" cy="30" rx="12" ry="6" fill="#e2e0d8" transform="rotate(-20 25 30)"/><ellipse cx="30" cy="31" rx="7" ry="5" fill="#e89a48"/>
<path d="M12 30L20 34M22 38L16 42" stroke="#ece4d8" stroke-width="3"/>
</g></svg></div>
    <div class="lab" style="width:52px">
      <div class="t" style="left:4px;top:3px;font-size:8px">苻城 研究生院</div>
    </div>
  </div>
  <div class="tile" style="top:336px">
    <div class="av"><svg width="46" height="46" style="left:0;top:0"><defs><clipPath id="c4"><circle cx="23" cy="23" r="23"/></clipPath></defs><g clip-path="url(#c4)">
<rect width="46" height="46" fill="#2d5a3a"/><rect x="0" y="0" width="46" height="10" fill="#3a6a40"/>
<ellipse cx="31" cy="14" rx="5" ry="8" fill="#1e1c1c"/><ellipse cx="31" cy="15" rx="3" ry="4" fill="#e8dcd4"/>
<path d="M-2 36C5 26 15 22 23 22C31 22 41 26 48 36V46H-2Z" fill="#2e78c8"/>
<path d="M4 42C8 33 15 30 23 30C31 30 38 33 42 42L42 48H4Z" fill="#fafafa"/>
<ellipse cx="16" cy="31" rx="6" ry="6" fill="#fff" stroke="#333" stroke-width="0.6"/><ellipse cx="29" cy="31" rx="6" ry="6" fill="#fff" stroke="#333" stroke-width="0.6"/>
<circle cx="18" cy="32" r="1.2" fill="#111"/><circle cx="28" cy="32" r="1.2" fill="#111"/><circle cx="23" cy="37" r="3.3" fill="#e04040"/>
</g></svg></div>
    <div class="lab" style="width:31px">
      <svg style="left:4px;top:2px" width="10" height="10"><rect x="3.5" y="0.5" width="3.5" height="6" rx="1.7" fill="#fff"/><path d="M2 5A3.5 3.5 0 0 0 8.5 5M5.2 8.5V10" fill="none" stroke="#fff"/><path d="M1 9.5L9 1" stroke="#e04848" stroke-width="1.2"/></svg>
      <div class="t" style="left:16px;top:3px;font-size:8px">LYH</div>
    </div>
  </div>
  <div class="tile" style="top:437px">
    <div class="av"><svg width="46" height="46" style="left:0;top:0"><defs><clipPath id="c5"><circle cx="23" cy="23" r="23"/></clipPath></defs><g clip-path="url(#c5)">
<rect width="46" height="46" fill="#c8a060"/>
<path d="M-2 46V22C0 5 12 0 23 0C34 0 46 5 48 22V46Z" fill="#d81e22"/>
<path d="M0 18C10 14 36 14 46 20V26C36 22 10 22 0 24Z" fill="#f0f0f4"/>
<ellipse cx="23" cy="35" rx="15" ry="13" fill="#f0a030"/><ellipse cx="23" cy="35" rx="13" ry="12" fill="#f4f2f4"/>
<path d="M12 27C16 24 30 24 34 27" stroke="#222" stroke-width="2" fill="none"/>
<ellipse cx="18" cy="35" rx="2" ry="2.5" fill="#4060a0"/><ellipse cx="27" cy="35" rx="2" ry="2.5" fill="#203060"/><circle cx="23" cy="41" r="1.5" fill="#80a0e0"/>
</g></svg></div>
    <div class="lab" style="width:49px">
      <svg style="left:4px;top:2px" width="10" height="10"><rect x="3.5" y="0.5" width="3.5" height="6" rx="1.7" fill="#fff"/><path d="M2 5A3.5 3.5 0 0 0 8.5 5M5.2 8.5V10" fill="none" stroke="#fff"/><path d="M1 9.5L9 1" stroke="#e04848" stroke-width="1.2"/></svg>
      <div class="t" style="left:16px;top:3px;font-size:8px">21钱昊哲</div>
    </div>
  </div>
  <div class="tile" style="top:538px">
    <div class="av"><svg width="46" height="46" style="left:0;top:0"><defs><clipPath id="c6"><circle cx="23" cy="23" r="23"/></clipPath></defs><g clip-path="url(#c6)">
<rect width="46" height="46" fill="#cfc27a"/><rect x="0" y="26" width="46" height="20" fill="#d8cc60"/><rect x="8" y="8" width="4" height="16" fill="#f0f0e0"/><rect x="17" y="14" width="6" height="8" fill="#c02020"/><rect x="4" y="21" width="6" height="4" fill="#e07030"/>
<ellipse cx="30" cy="16" rx="6" ry="8" fill="#c8a890"/><path d="M24 12C24 4 36 4 36 12Z" fill="#4a3a2e"/><path d="M25 17H35" stroke="#222" stroke-width="1.5"/>
<path d="M22 46V30C22 24 40 24 43 30V46Z" fill="#1e2430"/><ellipse cx="30" cy="40" rx="10" ry="3" fill="#e8d078"/>
<rect x="18" y="40" width="20" height="6" fill="#d8d8e8" opacity="0.7"/>
</g></svg></div>
    <div class="lab" style="width:31px">
      <svg style="left:4px;top:2px" width="10" height="10"><rect x="3.5" y="0.5" width="3.5" height="6" rx="1.7" fill="#fff"/><path d="M2 5A3.5 3.5 0 0 0 8.5 5M5.2 8.5V10" fill="none" stroke="#fff"/><path d="M1 9.5L9 1" stroke="#e04848" stroke-width="1.2"/></svg>
      <div class="t" style="left:16px;top:3px;font-size:8px">吕进</div>
    </div>
  </div>
</div>
<div id="panel" class="a">
<div class="a" style="left:0;top:0;width:113px;height:19px;background:#eaebed;border-bottom:1px solid #dcdcdc"></div>
<div class="a" style="left:113px;top:0;width:112px;height:19px;background:#fff;border-bottom:1px solid #e4e4e4"></div>
<div class="a" style="left:225px;top:0;width:19px;height:19px;background:#e9e9eb;border-bottom:1px solid #dcdcdc"></div>
<svg style="left:3.5px;top:5.5px" width="10" height="9"><path d="M0.5 0.5H9.5V6.5H4L2 8.5V6.5H0.5Z" fill="#8d9199"/><path d="M2.5 3.5H3.5M4.5 3.5H5.5M6.5 3.5H7.5" stroke="#fff"/></svg>
<div class="t" style="left:15px;top:5.5px;font-size:8px;color:#222">聊天</div>
<svg style="left:115.5px;top:4.5px" width="10" height="10"><circle cx="5" cy="3" r="2.6" fill="#858a92"/><path d="M0.5 10C0.5 6 9.5 6 9.5 10Z" fill="#858a92"/></svg>
<div class="t" style="left:128px;top:5.5px;font-size:7.7px;color:#222">管理成员(82)</div>
<div class="a" style="left:205.5px;top:8.5px;width:1.6px;height:1.6px;background:#333"></div><div class="a" style="left:208.8px;top:8.5px;width:1.6px;height:1.6px;background:#333"></div><div class="a" style="left:212px;top:8.5px;width:1.6px;height:1.6px;background:#333"></div>
<svg style="left:217px;top:6px" width="7" height="7"><path d="M0.5 0.5L5.5 5.5M5.5 0.5L0.5 5.5" stroke="#333" stroke-width="1.1"/></svg>
<div class="a" style="left:231px;top:7px;width:7px;height:1px;background:#aaa"></div>
<div class="a" style="left:231px;top:9px;width:7px;height:1px;background:#aaa"></div>
<div class="a" style="left:231px;top:11px;width:7px;height:1px;background:#aaa"></div>
<div class="a" style="left:8px;top:22px;width:228px;height:20px;border:1px solid #d6d6d6;border-radius:3px;background:#fff"></div>
<svg style="left:13px;top:27px" width="10" height="10"><circle cx="4.2" cy="4.2" r="3.3" fill="none" stroke="#555" stroke-width="1.1"/><path d="M6.6 6.6L9 9" stroke="#555" stroke-width="1.2"/></svg>
<div class="t" style="left:23px;top:27px;font-size:8.2px;color:#999">搜索成员</div>

<div class="row" style="top:53.0px"><div class="mav"><svg width="20" height="20" viewBox="0 0 46 46" style="left:0;top:0"><defs><clipPath id="m2"><circle cx="23" cy="23" r="23"/></clipPath></defs><g clip-path="url(#m2)">
<rect width="46" height="46" fill="#b4ddef"/><circle cx="23" cy="20" r="22" fill="#c2e4f3"/>
<path d="M16 13C15 5 30 4 30 12V16H16Z" fill="#1b1b1e"/>
<ellipse cx="23" cy="18.5" rx="6.5" ry="8" fill="#ecd9cc"/>
<path d="M8 48C8 32 12 29 23 28C34 29 38 32 38 48Z" fill="#f2f1f0"/>
</g></svg></div><div class="mn" style="top:5px">刘书宇</div><div class="mn" style="top:16px;color:#777">(主持人, 我)</div><div class="a" style="left:191px;top:9px;width:10px;height:10px;border-radius:50%;background:#f7d6d6"></div><div class="a" style="left:192.5px;top:10.5px;width:7px;height:7px;border-radius:50%;background:#e84040;border:1px solid #fff"></div><svg style="left:206px;top:8px" width="12" height="13"><rect x="4" y="0.7" width="4" height="7" rx="2" fill="none" stroke="#ebbcbc" stroke-width="1"/><path d="M2.3 5.5A3.7 3.7 0 0 0 9.7 5.5M6 9.3V12M3.5 12H8.5" fill="none" stroke="#ebbcbc" stroke-width="0.9"/><path d="M1.5 11.5L10.5 1" stroke="#ee8484" stroke-width="0.9"/></svg><svg style="left:222px;top:9px" width="13" height="11"><path d="M0.8 2.5H8.5V9H0.8Z" fill="#f5d0d0"/><path d="M8.5 5L12 2.8V8.8L8.5 6.5Z" fill="#f5d0d0"/><path d="M1 10L11 1" stroke="#f0a0a0" stroke-width="0.8"/></svg></div>
<div class="row" style="top:82.1px"><div class="mav"><svg width="20" height="20" viewBox="0 0 46 46" style="left:0;top:0"><defs><clipPath id="m1"><circle cx="23" cy="23" r="23"/></clipPath></defs><g clip-path="url(#m1)">
<rect width="46" height="46" fill="#8fb3b3"/><rect x="0" y="0" width="12" height="46" fill="#a9c9c8"/><rect x="3" y="8" width="4" height="20" fill="#e8f0ee"/><rect x="36" y="5" width="10" height="30" fill="#b8d4d2"/><rect x="38" y="8" width="4" height="16" fill="#eef4f2"/>
<path d="M10 8C10 -2 36 -2 36 8V12H10Z" fill="#2a2624"/>
<ellipse cx="22.5" cy="22" rx="14" ry="20" fill="#d6c2b0"/>
<path d="M14 15H20M26 15H32" stroke="#4a3a33" stroke-width="1.3"/><path d="M19 30H27" stroke="#b08070" stroke-width="1.4"/>
<path d="M-2 46V38C4 32 12 33 18 38L22 46ZM30 46L33 36C38 33 44 34 48 38V46Z" fill="#161616"/>
</g></svg></div><div class="mn">李力</div><svg style="left:222px;top:9px" width="13" height="11"><path d="M0.8 2.5H8.5V9H0.8Z" fill="#f5d0d0"/><path d="M8.5 5L12 2.8V8.8L8.5 6.5Z" fill="#f5d0d0"/><path d="M1 10L11 1" stroke="#f0a0a0" stroke-width="0.8"/></svg></div>
<div class="row" style="top:111.2px"><div class="mav"><svg width="20" height="20" viewBox="0 0 46 46" style="left:0;top:0"><defs><clipPath id="m4"><circle cx="23" cy="23" r="23"/></clipPath></defs><g clip-path="url(#m4)">
<rect width="46" height="46" fill="#2d5a3a"/><rect x="0" y="0" width="46" height="10" fill="#3a6a40"/>
<ellipse cx="31" cy="14" rx="5" ry="8" fill="#1e1c1c"/><ellipse cx="31" cy="15" rx="3" ry="4" fill="#e8dcd4"/>
<path d="M-2 36C5 26 15 22 23 22C31 22 41 26 48 36V46H-2Z" fill="#2e78c8"/>
<path d="M4 42C8 33 15 30 23 30C31 30 38 33 42 42L42 48H4Z" fill="#fafafa"/>
<ellipse cx="16" cy="31" rx="6" ry="6" fill="#fff" stroke="#333" stroke-width="0.6"/><ellipse cx="29" cy="31" rx="6" ry="6" fill="#fff" stroke="#333" stroke-width="0.6"/>
<circle cx="18" cy="32" r="1.2" fill="#111"/><circle cx="28" cy="32" r="1.2" fill="#111"/><circle cx="23" cy="37" r="3.3" fill="#e04040"/>
</g></svg></div><div class="mn">LYH</div><div class="a" style="left:191px;top:9px;width:10px;height:10px;border-radius:50%;background:#f7d6d6"></div><div class="a" style="left:192.5px;top:10.5px;width:7px;height:7px;border-radius:50%;background:#e84040;border:1px solid #fff"></div><svg style="left:206px;top:8px" width="12" height="13"><rect x="4" y="0.7" width="4" height="7" rx="2" fill="none" stroke="#ebbcbc" stroke-width="1"/><path d="M2.3 5.5A3.7 3.7 0 0 0 9.7 5.5M6 9.3V12M3.5 12H8.5" fill="none" stroke="#ebbcbc" stroke-width="0.9"/><path d="M1.5 11.5L10.5 1" stroke="#ee8484" stroke-width="0.9"/></svg><svg style="left:222px;top:9px" width="13" height="11"><path d="M0.8 2.5H8.5V9H0.8Z" fill="#f5d0d0"/><path d="M8.5 5L12 2.8V8.8L8.5 6.5Z" fill="#f5d0d0"/><path d="M1 10L11 1" stroke="#f0a0a0" stroke-width="0.8"/></svg></div>
<div class="row" style="top:140.3px"><div class="mav" style="background:#1b6ef3;color:#fff;font-size:7.5px;line-height:20px;text-align:center">子裕</div><div class="mn">张子裕</div><div class="a" style="left:191px;top:9px;width:10px;height:10px;border-radius:50%;background:#f7d6d6"></div><div class="a" style="left:192.5px;top:10.5px;width:7px;height:7px;border-radius:50%;background:#e84040;border:1px solid #fff"></div><svg style="left:206px;top:8px" width="12" height="13"><rect x="4" y="0.7" width="4" height="7" rx="2" fill="none" stroke="#ebbcbc" stroke-width="1"/><path d="M2.3 5.5A3.7 3.7 0 0 0 9.7 5.5M6 9.3V12M3.5 12H8.5" fill="none" stroke="#ebbcbc" stroke-width="0.9"/><path d="M1.5 11.5L10.5 1" stroke="#ee8484" stroke-width="0.9"/></svg><svg style="left:222px;top:9px" width="13" height="11"><path d="M0.8 2.5H8.5V9H0.8Z" fill="#f5d0d0"/><path d="M8.5 5L12 2.8V8.8L8.5 6.5Z" fill="#f5d0d0"/><path d="M1 10L11 1" stroke="#f0a0a0" stroke-width="0.8"/></svg></div>
<div class="row" style="top:169.4px"><div class="mn">赵子颢</div><div class="a" style="left:207px;top:9px;width:10px;height:10px;border-radius:50%;background:#f7d6d6"></div><div class="a" style="left:208.5px;top:10.5px;width:7px;height:7px;border-radius:50%;background:#e84040;border:1px solid #fff"></div><svg style="left:222px;top:8px" width="12" height="13"><rect x="4" y="0.7" width="4" height="7" rx="2" fill="none" stroke="#ebbcbc" stroke-width="1"/><path d="M2.3 5.5A3.7 3.7 0 0 0 9.7 5.5M6 9.3V12M3.5 12H8.5" fill="none" stroke="#ebbcbc" stroke-width="0.9"/><path d="M1.5 11.5L10.5 1" stroke="#ee8484" stroke-width="0.9"/></svg></div>
<div class="row" style="top:198.5px"><div class="mav"><svg width="20" height="20" viewBox="0 0 20 20" style="left:0;top:0"><rect width="20" height="20" fill="#1d4f9a"/><path d="M0 11C5 8 9 12 14 9S20 10 20 10V20H0Z" fill="#2a6cc0"/><path d="M3 12C6 10 9 13 12 11" stroke="#e8f0ff" stroke-width="1.5" fill="none"/><rect y="0" width="20" height="6" fill="#123a7a"/></svg></div><div class="mn">Sawyer_颤</div><div class="a" style="left:207px;top:9px;width:10px;height:10px;border-radius:50%;background:#f7d6d6"></div><div class="a" style="left:208.5px;top:10.5px;width:7px;height:7px;border-radius:50%;background:#e84040;border:1px solid #fff"></div><svg style="left:222px;top:9px" width="13" height="11"><path d="M0.8 2.5H8.5V9H0.8Z" fill="#f5d0d0"/><path d="M8.5 5L12 2.8V8.8L8.5 6.5Z" fill="#f5d0d0"/><path d="M1 10L11 1" stroke="#f0a0a0" stroke-width="0.8"/></svg></div>
<div class="row" style="top:227.6px"><div class="mav"><svg width="20" height="20" viewBox="0 0 20 20" style="left:0;top:0"><rect width="20" height="20" fill="#a89c88"/><ellipse cx="10" cy="11" rx="6" ry="6" fill="#e8e0d0"/><circle cx="8" cy="10" r="0.8" fill="#333"/><circle cx="12" cy="10" r="0.8" fill="#333"/></svg></div><div class="mn">-.-</div><svg style="left:206px;top:8px" width="12" height="13"><rect x="4" y="0.7" width="4" height="7" rx="2" fill="none" stroke="#ebbcbc" stroke-width="1"/><path d="M2.3 5.5A3.7 3.7 0 0 0 9.7 5.5M6 9.3V12M3.5 12H8.5" fill="none" stroke="#ebbcbc" stroke-width="0.9"/><path d="M1.5 11.5L10.5 1" stroke="#ee8484" stroke-width="0.9"/></svg><svg style="left:222px;top:9px" width="13" height="11"><path d="M0.8 2.5H8.5V9H0.8Z" fill="#f5d0d0"/><path d="M8.5 5L12 2.8V8.8L8.5 6.5Z" fill="#f5d0d0"/><path d="M1 10L11 1" stroke="#f0a0a0" stroke-width="0.8"/></svg></div>
<div class="row" style="top:256.7px"><div class="mav" style="background:#1b6ef3;color:#fff;font-size:7px;line-height:20px;text-align:center">61</div><div class="mn">139****4861</div><svg style="left:206px;top:8px" width="12" height="13"><rect x="4" y="0.7" width="4" height="7" rx="2" fill="none" stroke="#ebbcbc" stroke-width="1"/><path d="M2.3 5.5A3.7 3.7 0 0 0 9.7 5.5M6 9.3V12M3.5 12H8.5" fill="none" stroke="#ebbcbc" stroke-width="0.9"/><path d="M1.5 11.5L10.5 1" stroke="#ee8484" stroke-width="0.9"/></svg><svg style="left:222px;top:9px" width="13" height="11"><path d="M0.8 2.5H8.5V9H0.8Z" fill="#f5d0d0"/><path d="M8.5 5L12 2.8V8.8L8.5 6.5Z" fill="#f5d0d0"/><path d="M1 10L11 1" stroke="#f0a0a0" stroke-width="0.8"/></svg></div>
<div class="row" style="top:285.8px"><div class="mav"><svg width="20" height="20" viewBox="0 0 20 20" style="left:0;top:0"><rect width="20" height="20" fill="#f4e4c8"/><path d="M1 12C0 3 6 1 10 1S20 3 19 12L16 9C14 6 6 6 4 9Z" fill="#e8a838"/><ellipse cx="10" cy="13" rx="6" ry="6" fill="#fbeee4"/><circle cx="7.5" cy="12.5" r="1.2" fill="#4a8a6a"/><circle cx="12.5" cy="12.5" r="1.2" fill="#4a8a6a"/></svg></div><div class="mn">202021010161闻颖妮</div><svg style="left:206px;top:8px" width="12" height="13"><rect x="4" y="0.7" width="4" height="7" rx="2" fill="none" stroke="#ebbcbc" stroke-width="1"/><path d="M2.3 5.5A3.7 3.7 0 0 0 9.7 5.5M6 9.3V12M3.5 12H8.5" fill="none" stroke="#ebbcbc" stroke-width="0.9"/><path d="M1.5 11.5L10.5 1" stroke="#ee8484" stroke-width="0.9"/></svg><svg style="left:222px;top:9px" width="13" height="11"><path d="M0.8 2.5H8.5V9H0.8Z" fill="#f5d0d0"/><path d="M8.5 5L12 2.8V8.8L8.5 6.5Z" fill="#f5d0d0"/><path d="M1 10L11 1" stroke="#f0a0a0" stroke-width="0.8"/></svg></div>
<div class="row" style="top:314.9px"><div class="mav"><svg width="20" height="20" viewBox="0 0 20 20" style="left:0;top:0"><rect width="20" height="20" fill="#d8e4e0"/><rect x="0" y="0" width="6" height="20" fill="#a8bcb4"/><ellipse cx="11" cy="9" rx="4" ry="5" fill="#f0e0d4"/><path d="M6 7C6 2 16 2 16 7Z" fill="#6a5a50"/><path d="M4 20C4 14 18 14 18 20Z" fill="#f4f4f4"/></svg></div><div class="mn">202061206096-赵停存</div><svg style="left:206px;top:8px" width="12" height="13"><rect x="4" y="0.7" width="4" height="7" rx="2" fill="none" stroke="#ebbcbc" stroke-width="1"/><path d="M2.3 5.5A3.7 3.7 0 0 0 9.7 5.5M6 9.3V12M3.5 12H8.5" fill="none" stroke="#ebbcbc" stroke-width="0.9"/><path d="M1.5 11.5L10.5 1" stroke="#ee8484" stroke-width="0.9"/></svg><svg style="left:222px;top:9px" width="13" height="11"><path d="M0.8 2.5H8.5V9H0.8Z" fill="#f5d0d0"/><path d="M8.5 5L12 2.8V8.8L8.5 6.5Z" fill="#f5d0d0"/><path d="M1 10L11 1" stroke="#f0a0a0" stroke-width="0.8"/></svg></div>
<div class="row" style="top:344.0px"><div class="mav"><svg width="20" height="20" viewBox="0 0 20 20" style="left:0;top:0"><rect width="20" height="20" fill="#cfc4b8"/><ellipse cx="10" cy="11" rx="7" ry="6.5" fill="#e4d2c0"/><ellipse cx="5" cy="6" rx="3" ry="3" fill="#d8c0a8"/><ellipse cx="15" cy="6" rx="3" ry="3" fill="#d8c0a8"/><circle cx="8" cy="10.5" r="0.9" fill="#222"/><circle cx="12" cy="10.5" r="0.9" fill="#222"/></svg></div><div class="mn">202161111011王涛琪</div><svg style="left:206px;top:8px" width="12" height="13"><rect x="4" y="0.7" width="4" height="7" rx="2" fill="none" stroke="#ebbcbc" stroke-width="1"/><path d="M2.3 5.5A3.7 3.7 0 0 0 9.7 5.5M6 9.3V12M3.5 12H8.5" fill="none" stroke="#ebbcbc" stroke-width="0.9"/><path d="M1.5 11.5L10.5 1" stroke="#ee8484" stroke-width="0.9"/></svg><svg style="left:222px;top:9px" width="13" height="11"><path d="M0.8 2.5H8.5V9H0.8Z" fill="#f5d0d0"/><path d="M8.5 5L12 2.8V8.8L8.5 6.5Z" fill="#f5d0d0"/><path d="M1 10L11 1" stroke="#f0a0a0" stroke-width="0.8"/></svg></div>
<div class="row" style="top:373.1px"><div class="mav"><svg width="20" height="20" viewBox="0 0 20 20" style="left:0;top:0"><rect width="20" height="20" fill="#121212"/><circle cx="11" cy="8" r="4.5" fill="#8a7a50"/><circle cx="11" cy="8" r="2.5" fill="#e8dca8"/></svg></div><div class="mn">202161111027周正恒</div><svg style="left:206px;top:8px" width="12" height="13"><rect x="4" y="0.7" width="4" height="7" rx="2" fill="none" stroke="#ebbcbc" stroke-width="1"/><path d="M2.3 5.5A3.7 3.7 0 0 0 9.7 5.5M6 9.3V12M3.5 12H8.5" fill="none" stroke="#ebbcbc" stroke-width="0.9"/><path d="M1.5 11.5L10.5 1" stroke="#ee8484" stroke-width="0.9"/></svg><svg style="left:222px;top:9px" width="13" height="11"><path d="M0.8 2.5H8.5V9H0.8Z" fill="#f5d0d0"/><path d="M8.5 5L12 2.8V8.8L8.5 6.5Z" fill="#f5d0d0"/><path d="M1 10L11 1" stroke="#f0a0a0" stroke-width="0.8"/></svg></div>
<div class="row" style="top:402.2px"><div class="mav"><svg width="20" height="20" viewBox="0 0 20 20" style="left:0;top:0"><rect width="20" height="20" fill="#050505"/></svg></div><div class="mn">202161211036顾志航</div><svg style="left:206px;top:8px" width="12" height="13"><rect x="4" y="0.7" width="4" height="7" rx="2" fill="none" stroke="#ebbcbc" stroke-width="1"/><path d="M2.3 5.5A3.7 3.7 0 0 0 9.7 5.5M6 9.3V12M3.5 12H8.5" fill="none" stroke="#ebbcbc" stroke-width="0.9"/><path d="M1.5 11.5L10.5 1" stroke="#ee8484" stroke-width="0.9"/></svg><svg style="left:222px;top:9px" width="13" height="11"><path d="M0.8 2.5H8.5V9H0.8Z" fill="#f5d0d0"/><path d="M8.5 5L12 2.8V8.8L8.5 6.5Z" fill="#f5d0d0"/><path d="M1 10L11 1" stroke="#f0a0a0" stroke-width="0.8"/></svg></div>
<div class="row" style="top:431.3px"><div class="mav"><svg width="20" height="20" viewBox="0 0 20 20" style="left:0;top:0"><rect width="20" height="20" fill="#e4cfc0"/><ellipse cx="10" cy="12" rx="6" ry="6" fill="#d8a888"/><ellipse cx="6" cy="5" rx="3" ry="4" fill="#c89878"/><ellipse cx="14" cy="5" rx="3" ry="4" fill="#c89878"/><ellipse cx="10" cy="13" rx="3" ry="2" fill="#f4e4d8"/></svg></div><div class="mn">202161211062朱金津</div><svg style="left:206px;top:8px" width="12" height="13"><rect x="4" y="0.7" width="4" height="7" rx="2" fill="none" stroke="#ebbcbc" stroke-width="1"/><path d="M2.3 5.5A3.7 3.7 0 0 0 9.7 5.5M6 9.3V12M3.5 12H8.5" fill="none" stroke="#ebbcbc" stroke-width="0.9"/><path d="M1.5 11.5L10.5 1" stroke="#ee8484" stroke-width="0.9"/></svg><svg style="left:222px;top:9px" width="13" height="11"><path d="M0.8 2.5H8.5V9H0.8Z" fill="#f5d0d0"/><path d="M8.5 5L12 2.8V8.8L8.5 6.5Z" fill="#f5d0d0"/><path d="M1 10L11 1" stroke="#f0a0a0" stroke-width="0.8"/></svg></div>
<div class="row" style="top:460.4px"><div class="mav"><svg width="20" height="20" viewBox="0 0 46 46" style="left:0;top:0"><defs><clipPath id="m5"><circle cx="23" cy="23" r="23"/></clipPath></defs><g clip-path="url(#m5)">
<rect width="46" height="46" fill="#c8a060"/>
<path d="M-2 46V22C0 5 12 0 23 0C34 0 46 5 48 22V46Z" fill="#d81e22"/>
<path d="M0 18C10 14 36 14 46 20V26C36 22 10 22 0 24Z" fill="#f0f0f4"/>
<ellipse cx="23" cy="35" rx="15" ry="13" fill="#f0a030"/><ellipse cx="23" cy="35" rx="13" ry="12" fill="#f4f2f4"/>
<path d="M12 27C16 24 30 24 34 27" stroke="#222" stroke-width="2" fill="none"/>
<ellipse cx="18" cy="35" rx="2" ry="2.5" fill="#4060a0"/><ellipse cx="27" cy="35" rx="2" ry="2.5" fill="#203060"/><circle cx="23" cy="41" r="1.5" fill="#80a0e0"/>
</g></svg></div><div class="mn">21钱昊哲</div><svg style="left:206px;top:8px" width="12" height="13"><rect x="4" y="0.7" width="4" height="7" rx="2" fill="none" stroke="#ebbcbc" stroke-width="1"/><path d="M2.3 5.5A3.7 3.7 0 0 0 9.7 5.5M6 9.3V12M3.5 12H8.5" fill="none" stroke="#ebbcbc" stroke-width="0.9"/><path d="M1.5 11.5L10.5 1" stroke="#ee8484" stroke-width="0.9"/></svg><svg style="left:222px;top:9px" width="13" height="11"><path d="M0.8 2.5H8.5V9H0.8Z" fill="#f5d0d0"/><path d="M8.5 5L12 2.8V8.8L8.5 6.5Z" fill="#f5d0d0"/><path d="M1 10L11 1" stroke="#f0a0a0" stroke-width="0.8"/></svg></div>
<div class="row" style="top:489.5px"><div class="mav"><svg width="20" height="20" viewBox="0 0 20 20" style="left:0;top:0"><rect width="20" height="20" fill="#2a2a2a"/><circle cx="10" cy="10" r="6" fill="#555"/><path d="M6 8H14M7 12H13" stroke="#999" stroke-width="1"/></svg></div><div class="mn">DF</div><svg style="left:206px;top:8px" width="12" height="13"><rect x="4" y="0.7" width="4" height="7" rx="2" fill="none" stroke="#ebbcbc" stroke-width="1"/><path d="M2.3 5.5A3.7 3.7 0 0 0 9.7 5.5M6 9.3V12M3.5 12H8.5" fill="none" stroke="#ebbcbc" stroke-width="0.9"/><path d="M1.5 11.5L10.5 1" stroke="#ee8484" stroke-width="0.9"/></svg><svg style="left:222px;top:9px" width="13" height="11"><path d="M0.8 2.5H8.5V9H0.8Z" fill="#f5d0d0"/><path d="M8.5 5L12 2.8V8.8L8.5 6.5Z" fill="#f5d0d0"/><path d="M1 10L11 1" stroke="#f0a0a0" stroke-width="0.8"/></svg></div>
<div class="row" style="top:518.6px"><div class="mav"><svg width="20" height="20" viewBox="0 0 20 20" style="left:0;top:0"><rect width="20" height="20" fill="#a8cce8"/><rect y="0" width="20" height="9" fill="#d8e8f4"/><rect y="13" width="20" height="7" fill="#6aa0cc"/></svg></div><div class="mn">miko</div><svg style="left:206px;top:8px" width="12" height="13"><rect x="4" y="0.7" width="4" height="7" rx="2" fill="none" stroke="#ebbcbc" stroke-width="1"/><path d="M2.3 5.5A3.7 3.7 0 0 0 9.7 5.5M6 9.3V12M3.5 12H8.5" fill="none" stroke="#ebbcbc" stroke-width="0.9"/><path d="M1.5 11.5L10.5 1" stroke="#ee8484" stroke-width="0.9"/></svg><svg style="left:222px;top:9px" width="13" height="11"><path d="M0.8 2.5H8.5V9H0.8Z" fill="#f5d0d0"/><path d="M8.5 5L12 2.8V8.8L8.5 6.5Z" fill="#f5d0d0"/><path d="M1 10L11 1" stroke="#f0a0a0" stroke-width="0.8"/></svg></div>
<div class="row" style="top:547.7px"><div class="mav"><svg width="20" height="20" viewBox="0 0 20 20" style="left:0;top:0"><rect width="20" height="20" fill="#4a8ac0"/><path d="M0 12L8 6L14 10L20 7V20H0Z" fill="#5a9a70"/><circle cx="6" cy="5" r="2" fill="#cfe4f0"/></svg></div><div class="mn">y</div><svg style="left:206px;top:8px" width="12" height="13"><rect x="4" y="0.7" width="4" height="7" rx="2" fill="none" stroke="#ebbcbc" stroke-width="1"/><path d="M2.3 5.5A3.7 3.7 0 0 0 9.7 5.5M6 9.3V12M3.5 12H8.5" fill="none" stroke="#ebbcbc" stroke-width="0.9"/><path d="M1.5 11.5L10.5 1" stroke="#ee8484" stroke-width="0.9"/></svg><svg style="left:222px;top:9px" width="13" height="11"><path d="M0.8 2.5H8.5V9H0.8Z" fill="#f5d0d0"/><path d="M8.5 5L12 2.8V8.8L8.5 6.5Z" fill="#f5d0d0"/><path d="M1 10L11 1" stroke="#f0a0a0" stroke-width="0.8"/></svg></div>
<div class="row" style="top:576.8px"><div class="mav"><svg width="20" height="20" viewBox="0 0 20 20" style="left:0;top:0"><rect width="20" height="20" fill="#777"/><path d="M2 9C2 2 18 2 18 9Z" fill="#e8e8e4"/><ellipse cx="10" cy="13" rx="7" ry="6" fill="#d8a880"/><path d="M4 12H16" stroke="#333" stroke-width="2"/><path d="M6 16C8 14 12 14 14 16" stroke="#3a2820" stroke-width="1.5" fill="none"/></svg></div><div class="mn">yiming</div><svg style="left:206px;top:8px" width="12" height="13"><rect x="4" y="0.7" width="4" height="7" rx="2" fill="none" stroke="#ebbcbc" stroke-width="1"/><path d="M2.3 5.5A3.7 3.7 0 0 0 9.7 5.5M6 9.3V12M3.5 12H8.5" fill="none" stroke="#ebbcbc" stroke-width="0.9"/><path d="M1.5 11.5L10.5 1" stroke="#ee8484" stroke-width="0.9"/></svg><svg style="left:222px;top:9px" width="13" height="11"><path d="M0.8 2.5H8.5V9H0.8Z" fill="#f5d0d0"/><path d="M8.5 5L12 2.8V8.8L8.5 6.5Z" fill="#f5d0d0"/><path d="M1 10L11 1" stroke="#f0a0a0" stroke-width="0.8"/></svg></div>
<div class="row" style="top:605.9px"><div class="mav"><svg width="20" height="20" viewBox="0 0 20 20" style="left:0;top:0"><rect width="20" height="20" fill="#c89a5a"/><rect x="0" y="0" width="20" height="7" fill="#e8c890"/><path d="M5 20C5 10 7 6 10 6S15 10 15 20Z" fill="#5a2a22"/><ellipse cx="10" cy="10" rx="2.5" ry="3" fill="#e8c0a0"/></svg></div><div class="mn">Z.Si</div><svg style="left:206px;top:8px" width="12" height="13"><rect x="4" y="0.7" width="4" height="7" rx="2" fill="none" stroke="#ebbcbc" stroke-width="1"/><path d="M2.3 5.5A3.7 3.7 0 0 0 9.7 5.5M6 9.3V12M3.5 12H8.5" fill="none" stroke="#ebbcbc" stroke-width="0.9"/><path d="M1.5 11.5L10.5 1" stroke="#ee8484" stroke-width="0.9"/></svg><svg style="left:222px;top:9px" width="13" height="11"><path d="M0.8 2.5H8.5V9H0.8Z" fill="#f5d0d0"/><path d="M8.5 5L12 2.8V8.8L8.5 6.5Z" fill="#f5d0d0"/><path d="M1 10L11 1" stroke="#f0a0a0" stroke-width="0.8"/></svg></div>
<div class="a" style="left:59px;top:92px;width:160px;height:23.5px;background:#37393d;border-radius:3px"></div>
<div class="a" style="left:81px;top:96px;width:1px;height:15px;background:#45474b"></div>
<svg style="left:64px;top:98px" width="12" height="13"><rect x="4" y="0.7" width="4" height="7" rx="2" fill="none" stroke="#999" stroke-width="1"/><path d="M2.3 5.5A3.7 3.7 0 0 0 9.7 5.5M6 9.3V12" fill="none" stroke="#999" stroke-width="0.9"/><path d="M1.5 11.5L10.5 1" stroke="#d55" stroke-width="1.1"/></svg>
<div class="t" style="left:88px;top:101px;font-size:8.2px;color:#eee">正在讲话: 李力;</div>
<div class="a" style="left:165px;top:98px;width:10px;height:10px;background:#4c4e53;transform:rotate(45deg);filter:blur(1px)"></div>
<div class="a" style="left:177px;top:99px;width:10px;height:10px;background:#55575c;transform:rotate(45deg);filter:blur(1px)"></div>
<div class="a" style="left:237.5px;top:88px;width:5px;height:38px;background:#606367;border-radius:2.5px"></div>
<div class="a" style="left:238px;top:110px;width:3px;height:2px;background:#3ec060"></div>
<div class="a" style="left:238px;top:114px;width:3px;height:2px;background:#3ec060"></div>
<div class="a" style="left:238px;top:118px;width:3px;height:2px;background:#3ec060"></div>
<div class="a" style="left:238px;top:122px;width:3px;height:2px;background:#3ec060"></div>
<div class="a" style="left:0;top:628px;width:244px;height:40px;background:#fff;border-top:1px solid #ececec"></div>
<div class="a" style="left:29px;top:639px;width:59px;height:17px;border:1px solid #dfe3ea;background:#fff;border-radius:2px"></div>
<div class="t" style="left:42px;top:643.5px;font-size:7.8px;color:#1c6fe0">全体静音</div>
<div class="a" style="left:98px;top:639px;width:58px;height:17px;border:1px solid #dfe3ea;background:#fff;border-radius:2px"></div>
<div class="t" style="left:103px;top:643.5px;font-size:7.9px;color:#1c6fe0">解除全体静音</div>
<div class="a" style="left:167px;top:639px;width:47px;height:17px;border:1px solid #dfe3ea;background:#fff;border-radius:2px"></div>
<div class="t" style="left:179px;top:643.5px;font-size:7.9px;color:#1c6fe0">更多 <span style="font-size:6px">▾</span></div>

<div class="a" style="left:237px;top:602px;width:7px;height:39px;background:#3c3f44;border-radius:2px"></div>
<div class="a" style="left:239px;top:630px;width:2px;height:2px;background:#5a8ad0"></div><div class="a" style="left:239px;top:635px;width:2px;height:2px;background:#5a8ad0"></div></div><div id="taskbar" class="a">
  <div class="a" style="left:0;top:0;width:32px;height:26px;background:#e2d4d4"></div>
  <svg style="left:10px;top:8px" width="12" height="12"><path d="M0 1.5L5 0.8V5.5H0ZM6 0.6L12 0V5.5H6ZM0 6.5H5V11.2L0 10.5ZM6 6.5H12V12L6 11.4Z" fill="#111"/></svg>
  <div class="a" style="left:32px;top:0;width:227px;height:26px;background:#fff;border-top:1px solid #e8e8e8"></div>
  <svg style="left:40px;top:7px" width="12" height="12"><circle cx="7.3" cy="4.7" r="3.8" fill="none" stroke="#333" stroke-width="1.1"/><path d="M4.6 7.4L0.8 11.2" stroke="#333" stroke-width="1.3"/></svg>
  <div class="t" style="left:58px;top:8px;font-size:9px;letter-spacing:0.25px;color:#333">在这里输入你要搜索的内容</div>
  <div class="a" style="left:269px;top:7px;width:11px;height:11px;border:1.6px solid #111;border-radius:50%"></div>
  <svg style="left:300px;top:7px" width="13" height="12"><rect x="3" y="2" width="7" height="8" fill="none" stroke="#111" stroke-width="1.3"/><path d="M0.7 0V12M12.3 0V4M12.3 6V12" stroke="#111" stroke-width="1.3"/></svg>
  <svg style="left:333px;top:6px" width="14" height="14"><path d="M7 7C3 1 0 3 1 6C2 8 5 8 7 7C1 11 3 14 6 13C8 12 8 9 7 7C11 13 14 11 13 8C12 6 9 6 7 7C13 3 11 0 8 1C6 2 6 5 7 7Z" fill="#111"/></svg>
  <div class="a" style="left:361px;top:8px;width:1px;height:10px;background:#555"></div>
  <div class="a" style="left:364px;top:8px;width:1px;height:10px;background:#555"></div>
  <svg style="left:382px;top:6px" width="12" height="13"><path d="M1 13V4L3 0.5L5 4H7L9 0.5L11 4V13Z" fill="#2a4c8a"/><circle cx="4.5" cy="7" r="0.8" fill="#fff"/><circle cx="7.5" cy="7" r="0.8" fill="#fff"/></svg>
  <svg style="left:413px;top:6px" width="16" height="14"><rect x="0" y="2" width="16" height="12" fill="#1a8ae0"/><path d="M0 2L8 8L16 2" fill="none" stroke="#fff" stroke-width="1.2"/><path d="M0 2L8 0L16 2Z" fill="#0f6bb8"/></svg>
  <svg style="left:448px;top:6px" width="16" height="14"><rect x="3" y="0" width="12" height="9" fill="#6fb8e8" transform="skewY(8)"/><path d="M1 11L12 13" stroke="#9ab" stroke-width="2"/></svg>
  <div class="a" style="left:479px;top:6px;width:14px;height:14px;background:#001e36;border:1px solid #31a8ff"></div>
  <div class="t" style="left:481px;top:9px;font-size:7.5px;color:#31a8ff;font-weight:bold">Ps</div>
  <div class="a" style="left:510px;top:5px;width:15px;height:15px;border-radius:50%;background:radial-gradient(circle at 55% 55%,#7a3bd8 0 25%,#ff7a1a 30%,#ff3e3e 80%)"></div>
  <div class="a" style="left:543px;top:5px;width:15px;height:15px;border-radius:50%;background:conic-gradient(from 30deg,#ea4335 0 120deg,#fbbc05 120deg 240deg,#34a853 240deg 360deg)"></div>
  <div class="a" style="left:547px;top:9px;width:7px;height:7px;border-radius:50%;background:#4285f4;border:1.2px solid #fff"></div>
  <div class="a" style="left:576px;top:5px;width:13px;height:15px;border-radius:50%;border:3.5px solid #e3242b"></div>
  <svg style="left:608px;top:5px" width="16" height="16"><rect x="1" y="1" width="10" height="8" fill="#2a62c8"/><rect x="3" y="9" width="6" height="3" fill="#999"/><circle cx="11" cy="11" r="4" fill="#ddd" stroke="#666" stroke-width="0.8"/></svg>
  <div class="a" style="left:641px;top:5px;width:15px;height:15px;background:#2c8cf4;border-radius:2px"></div>
  <svg style="left:643px;top:7px" width="11" height="11"><path d="M1 2L6 5L10 1L8 8L4 10L5 6Z" fill="#fff"/></svg>
  <svg style="left:671px;top:6px" width="16" height="14"><path d="M0 1H6L7.5 3H16V13H0Z" fill="#e8b540"/><rect x="0" y="5" width="16" height="8" fill="#f6d067"/><rect x="5" y="8" width="6" height="5" fill="#2a7ad0"/></svg>
  <div class="a" style="left:705px;top:5px;width:16px;height:15px;background:#1d7044;border-radius:1px"></div>
  <div class="a" style="left:713px;top:5px;width:8px;height:15px;background:#21a366"></div>
  <div class="t" style="left:706px;top:8px;font-size:9px;color:#fff;font-weight:bold">X</div>
  <div class="a" style="left:735px;top:7px;width:11px;height:9px;background:#3cb034;border-radius:50%"></div>
  <div class="a" style="left:742px;top:10px;width:9px;height:7px;background:#d8e8d8;border-radius:50%"></div>
  <svg style="left:770px;top:4px" width="15" height="17"><path d="M1 0.5H10L14 4.5V16.5H1Z" fill="#fff" stroke="#888" stroke-width="0.8"/><rect x="3" y="5" width="9" height="5" fill="#6a9ad8"/><rect x="3" y="11" width="9" height="3" fill="#4a6aa8"/></svg>
  <div class="a" style="left:794px;top:0;width:30px;height:26px;background:#f4f4f4"></div>
  <div class="a" style="left:801px;top:5px;width:16px;height:15px;background:#1a73e8;border-radius:3px"></div>
  <svg style="left:803px;top:9px" width="12" height="7"><path d="M0.5 6.5L3.5 0.5L6 4L8.5 0.5L11.5 6.5" fill="none" stroke="#fff" stroke-width="1.8"/></svg>
  <div class="a" style="left:833px;top:5px;width:16px;height:15px;background:linear-gradient(180deg,#7ac8f0,#1e78c8)"></div>
  <svg style="left:833px;top:10px" width="16" height="10"><path d="M0 10L6 2L10 6L16 0V10Z" fill="#0d4f94"/></svg>
  <div class="a" style="left:505px;top:24px;width:26px;height:2px;background:#4a8ad0"></div>
  <div class="a" style="left:538px;top:24px;width:25px;height:2px;background:#4a8ad0"></div>
  <div class="a" style="left:667px;top:24px;width:25px;height:2px;background:#4a8ad0"></div>
  <div class="a" style="left:699px;top:24px;width:26px;height:2px;background:#4a8ad0"></div>
  <div class="a" style="left:732px;top:24px;width:26px;height:2px;background:#4a8ad0"></div>
  <div class="a" style="left:764px;top:24px;width:26px;height:2px;background:#4a8ad0"></div>
  <div class="a" style="left:794px;top:24px;width:30px;height:2px;background:#4a8ad0"></div>
  <div class="a" style="left:829px;top:24px;width:26px;height:2px;background:#4a8ad0"></div>
  <!-- tray -->
  <svg style="left:996px;top:10px" width="9" height="6"><path d="M0.5 5L4.5 1L8.5 5" fill="none" stroke="#222" stroke-width="1.1"/></svg>
  <svg style="left:1011px;top:6px" width="13" height="13"><rect x="0.5" y="1" width="10" height="9" fill="#fff" stroke="#444"/><path d="M2 8L8 3" stroke="#444"/><circle cx="10.5" cy="10.5" r="2.2" fill="#3a7ad8"/></svg>
  <div class="a" style="left:1029px;top:6px;width:6px;height:10px;background:#222;border-radius:3px"></div>
  <div class="a" style="left:1028px;top:17px;width:8px;height:2px;background:#222"></div>
  <div class="a" style="left:1043px;top:8px;width:8px;height:7px;background:#3cb034;border-radius:50%"></div>
  <div class="a" style="left:1048px;top:11px;width:7px;height:5px;background:#c8d8c8;border-radius:50%"></div>
  <div class="a" style="left:1058px;top:6px;width:13px;height:13px;border-radius:50%;background:#f0d020;border:1.5px solid #38a838"></div>
  <div class="t" style="left:1061px;top:7px;font-size:10px;color:#222;font-weight:bold">+</div>
  <svg style="left:1075px;top:7px" width="12" height="12"><path d="M1 11A10 10 0 0 1 11 1M3.5 11A7.5 7.5 0 0 1 11 3.5M6 11A5 5 0 0 1 11 6M8.5 11A2.5 2.5 0 0 1 11 8.5" fill="none" stroke="#666" stroke-width="0.9"/></svg>
  <svg style="left:1090px;top:7px" width="13" height="12"><path d="M0.5 4H3L6.5 0.5V11.5L3 8H0.5Z" fill="none" stroke="#222" stroke-width="1"/><path d="M8.5 3.5A3 3 0 0 1 8.5 8.5M10.5 2A5 5 0 0 1 10.5 10" fill="none" stroke="#222" stroke-width="0.9"/></svg>
  <svg style="left:1105px;top:8px" width="14" height="10"><rect x="0.5" y="2" width="11" height="7" fill="none" stroke="#222" stroke-width="1.2"/><rect x="2" y="3.5" width="8" height="4" fill="#222"/><path d="M12 4V7" stroke="#222" stroke-width="1.5"/><path d="M1 0.5H4" stroke="#222"/></svg>
  <div class="t" style="left:1122px;top:8px;font-size:10px;color:#444">中</div>
  <div class="a" style="left:1140px;top:7px;width:12px;height:12px;background:#e8562a;border-radius:3px;transform:rotate(-10deg)"></div>
  <div class="t" style="left:1142.5px;top:8px;font-size:10px;color:#fff;font-weight:bold;transform:rotate(-10deg)">S</div>
  <div class="t" style="left:1163px;top:3px;font-size:8.2px;color:#222">17:26 周三</div>
  <div class="t" style="left:1163px;top:14px;font-size:8.6px;color:#222">2022/4/2</div>
  <div class="a" style="left:1196px;top:13px;width:10px;height:10px;border-radius:50%;background:#e81e1e;border:1px solid #fff"></div>
  <div class="t" style="left:1199px;top:15px;font-size:7px;color:#fff;font-weight:bold">1</div>
  <svg style="left:1213px;top:5px" width="14" height="13"><rect x="2" y="1" width="10" height="10" fill="#fff" stroke="#222" stroke-width="1.3"/><path d="M4 4H10M4 6.5H10M4 9H8" stroke="#222"/></svg>
  <div class="a" style="left:1221px;top:13px;width:11px;height:9px;background:#e81e1e"></div>
  <div class="t" style="left:1222px;top:15px;font-size:6.5px;color:#fff;font-weight:bold">54</div>
  <svg style="left:1240px;top:5px" width="12" height="12"><path d="M0.5 0.5H11.5V8.5H4L1.5 11V8.5H0.5Z" fill="#fff" stroke="#222" stroke-width="1.2"/><path d="M3 3H9M3 5.5H9" stroke="#222"/></svg>
  <div class="a" style="left:1246px;top:13px;width:10px;height:10px;border-radius:50%;background:#fff;border:1px solid #444"></div>
  <div class="t" style="left:1249px;top:14.5px;font-size:7px;color:#222">1</div>
  <div class="a" style="left:1264px;top:0;width:1px;height:26px;background:#bbb"></div>
</div>
</body></html>
